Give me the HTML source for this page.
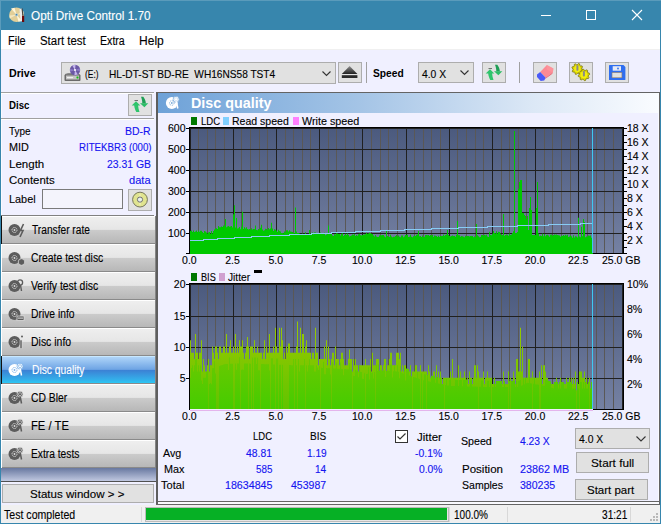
<!DOCTYPE html><html><head><meta charset="utf-8"><style>
html,body{margin:0;padding:0;}
body{width:661px;height:524px;overflow:hidden;position:relative;background:#f0f0ff;font-family:"Liberation Sans",sans-serif;}
.t{position:absolute;white-space:nowrap;line-height:1;-webkit-text-stroke:0.12px currentColor;}
div{box-sizing:border-box;}
svg{position:absolute;}
</style></head><body>

<div style="position:absolute;left:0px;top:0px;width:661px;height:30px;background:#3786ad;"></div>
<div class="t" style="left:30.50px;top:10.00px;font-size:12px;color:#fff;transform:scaleX(0.9791);transform-origin:0 0;white-space:pre;">Opti Drive Control 1.70</div>
<svg style="left:8px;top:6px" width="18" height="18"><circle cx="8.5" cy="8.8" r="7.3" fill="#e2cf98"/><path d="M8.5 8.8 L3 2.5 L6.5 1.8 Z M8.5 8.8 L14 15 L10.5 15.8 Z" fill="#fff6d8"/><path d="M8.5 8.8 L1.3 9.5 L1.8 12.5 Z M8.5 8.8 L15.7 8 L15.3 5 Z" fill="#f4e8c0"/><circle cx="8.5" cy="8.8" r="1.6" fill="#b8c8d0"/><circle cx="8.5" cy="8.8" r="0.8" fill="#3786ad"/><path d="M11.5 3.2 L13.6 2.2 L14.4 15 L12.6 15.6 Z" fill="#ececec"/><path d="M13.6 2.2 L14.6 2.6 L15.4 9.5 L14.3 9.8 Z" fill="#404040"/><rect x="14" y="9.8" width="2.2" height="6.2" fill="#6e0808"/></svg>
<div style="position:absolute;left:541px;top:15px;width:10px;height:1px;background:#fff;"></div>
<div style="position:absolute;left:586px;top:10px;width:10px;height:10px;border:1px solid #fff;"></div>
<svg style="left:631px;top:9px" width="12" height="12"><path d="M1 1 L11 11 M11 1 L1 11" stroke="#fff" stroke-width="1.1"/></svg>
<div style="position:absolute;left:0px;top:30px;width:661px;height:19px;background:#fff;"></div>
<div style="position:absolute;left:0px;top:49px;width:661px;height:1px;background:#f0f0f0;"></div>
<div class="t" style="left:8.30px;top:35.00px;font-size:12px;color:#000;transform:scaleX(0.9147);transform-origin:0 0;white-space:pre;">File</div>
<div class="t" style="left:40.10px;top:35.00px;font-size:12px;color:#000;transform:scaleX(0.9521);transform-origin:0 0;white-space:pre;">Start test</div>
<div class="t" style="left:100.20px;top:35.00px;font-size:12px;color:#000;transform:scaleX(0.8841);transform-origin:0 0;white-space:pre;">Extra</div>
<div class="t" style="left:139.20px;top:35.00px;font-size:12px;color:#000;transform:scaleX(1.0040);transform-origin:0 0;white-space:pre;">Help</div>
<div style="position:absolute;left:0px;top:0px;width:1px;height:524px;background:#3786ad;"></div>
<div style="position:absolute;left:660px;top:0px;width:1px;height:524px;background:#3786ad;"></div>
<div style="position:absolute;left:0px;top:523px;width:661px;height:1px;background:#3786ad;"></div>
<div style="position:absolute;left:0px;top:0px;width:661px;height:1px;background:#5a9bbb;"></div>
<div style="position:absolute;left:0px;top:0px;width:1px;height:30px;background:#5a9bbb;"></div>
<div class="t" style="left:9.30px;top:68.00px;font-size:11.3px;color:#000;transform:scaleX(0.9451);transform-origin:0 0;white-space:pre;font-weight:bold;-webkit-text-stroke:0;">Drive</div>
<div style="position:absolute;left:61px;top:62px;width:275px;height:22px;background:#e1e1e1;border:1px solid #adadad;"></div>
<svg style="left:63px;top:64px" width="19" height="18"><defs><radialGradient id="pd"><stop offset="0" stop-color="#fff"/><stop offset="0.25" stop-color="#b8a8e0"/><stop offset="1" stop-color="#6a58a8"/></radialGradient></defs><path d="M2 10 L5 9 L15 9 L17 10.5 L17 16.5 L2 16.5 Z" fill="#8a8a8a"/><rect x="1.5" y="10.5" width="16" height="6.5" rx="1" fill="#6a6a6a"/><rect x="3" y="11.5" width="13" height="4" fill="#c4c4c4"/><rect x="4" y="13" width="6" height="1.2" fill="#f0f0f0"/><circle cx="12" cy="6" r="5.2" fill="#6a58a4"/><path d="M12 6 L9.2 1.4 L12.6 0.8 Z M12 6 L14.8 10.6 L11.4 11.2 Z" fill="#c4b4ec"/><path d="M12 6 L16.9 4.2 L17 7.2 Z M12 6 L7.1 7.8 L7 4.8 Z" fill="#8a78c4"/><circle cx="12" cy="6" r="1.1" fill="#fff"/><path d="M13.5 13.5 H15.5 M14.5 12.5 V14.5" stroke="#10c010" stroke-width="1.3"/></svg>
<div class="t" style="left:84.80px;top:69.00px;font-size:11px;color:#000;transform:scaleX(0.7627);transform-origin:0 0;white-space:pre;">(E:)</div>
<div class="t" style="left:108.80px;top:69.00px;font-size:11px;color:#000;transform:scaleX(0.9205);transform-origin:0 0;white-space:pre;">HL-DT-ST BD-RE  WH16NS58 TST4</div>
<svg style="left:322px;top:71px" width="9" height="6"><path d="M0.5 0.5 L4.5 4.5 L8.5 0.5" fill="none" stroke="#333" stroke-width="1.1"/></svg>
<div style="position:absolute;left:338px;top:62px;width:24px;height:21px;background:#e1e1e1;border:1px solid #adadad;"></div>
<svg style="left:341px;top:65px" width="18" height="15"><defs><linearGradient id="ej" x1="0" y1="0" x2="0" y2="1"><stop offset="0" stop-color="#909090"/><stop offset="1" stop-color="#202020"/></linearGradient></defs><path d="M8.6 1 L16.4 9 L0.8 9 Z" fill="url(#ej)"/><rect x="0.8" y="10.2" width="15.6" height="2.8" fill="#2a2a2a"/></svg>
<div style="position:absolute;left:366px;top:62px;width:1px;height:21px;background:#a0a0a0;"></div>
<div class="t" style="left:373.30px;top:68.00px;font-size:11.3px;color:#000;transform:scaleX(0.9056);transform-origin:0 0;white-space:pre;font-weight:bold;-webkit-text-stroke:0;">Speed</div>
<div style="position:absolute;left:418px;top:62px;width:56px;height:21px;background:#e1e1e1;border:1px solid #adadad;"></div>
<div class="t" style="left:421.80px;top:69.00px;font-size:11px;color:#000;transform:scaleX(0.9377);transform-origin:0 0;white-space:pre;">4.0 X</div>
<svg style="left:460px;top:70px" width="9" height="6"><path d="M0.5 0.5 L4.5 4.5 L8.5 0.5" fill="none" stroke="#333" stroke-width="1.1"/></svg>
<div style="position:absolute;left:482px;top:62px;width:24px;height:21px;background:#e1e1e1;border:1px solid #adadad;"></div>
<svg style="left:482px;top:62px" width="24" height="21"><path d="M3.7 11.4 L8 7.2 L12.3 11.4 L10.1 11.4 C10.3 13.8 10.7 15.8 11.5 17.9 L8.3 17.9 C7.2 15.8 6.4 13.6 6.2 11.4 Z" fill="#2fc46c"/><path d="M13 2.8 L15.3 2.8 C16.7 4.6 17.7 6.8 17.9 9.4 L14.3 9.4 C14.3 7 13.8 4.8 13 2.8 Z" fill="#1f9e56"/><path d="M12 9.2 L20.3 9.2 L16.4 13.3 Z" fill="#2cbd66"/><rect x="6.5" y="6.1" width="3.5" height="0.9" fill="#666"/></svg>
<div style="position:absolute;left:519px;top:62px;width:1px;height:21px;background:#a0a0a0;"></div>
<div style="position:absolute;left:533px;top:62px;width:24px;height:21px;background:#e1e1e1;border:1px solid #adadad;"></div>
<svg style="left:532px;top:60px" width="28" height="26"><path d="M8.2 11.9 L14.9 5 L21.4 8.5 L20.9 12.4 L13.7 17.7 Z" fill="#fb8a94"/><path d="M14.9 5 L21.4 8.5 L20.9 12.4 L14.5 9.5 Z" fill="#ff9aa0" opacity="0.6"/><path d="M5 14.4 L8.2 11.9 L13.7 17.7 L12.2 20.4 L8.7 20.9 L5 16.9 Z" fill="#4a5af8"/><path d="M13.7 17.7 L20.9 12.4 L20 14 L13 19 Z" fill="#e85060"/></svg>
<div style="position:absolute;left:569px;top:62px;width:24px;height:21px;background:#e1e1e1;border:1px solid #adadad;"></div>
<svg style="left:567px;top:60px" width="28" height="26"><path d="M15.89 10.11 L15.57 11.16 L14.05 11.46 L13.50 12.12 L13.49 13.67 L12.52 14.18 L11.24 13.32 L10.38 13.40 L9.29 14.49 L8.24 14.17 L7.94 12.65 L7.28 12.10 L5.73 12.09 L5.22 11.12 L6.08 9.84 L6.00 8.98 L4.91 7.89 L5.23 6.84 L6.75 6.54 L7.30 5.88 L7.31 4.33 L8.28 3.82 L9.56 4.68 L10.42 4.60 L11.51 3.51 L12.56 3.83 L12.86 5.35 L13.52 5.90 L15.07 5.91 L15.58 6.88 L14.72 8.16 L14.80 9.02Z" fill="#dcd400" stroke="#6e6a10" stroke-width="0.7"/><path d="M21.99 17.68 L21.35 18.62 L19.79 18.48 L19.03 18.98 L18.53 20.47 L17.42 20.68 L16.41 19.47 L15.52 19.29 L14.12 19.99 L13.18 19.35 L13.32 17.79 L12.82 17.03 L11.33 16.53 L11.12 15.42 L12.33 14.41 L12.51 13.52 L11.81 12.12 L12.45 11.18 L14.01 11.32 L14.77 10.82 L15.27 9.33 L16.38 9.12 L17.39 10.33 L18.28 10.51 L19.68 9.81 L20.62 10.45 L20.48 12.01 L20.98 12.77 L22.47 13.27 L22.68 14.38 L21.47 15.39 L21.29 16.28Z" fill="#dcd400" stroke="#6e6a10" stroke-width="0.7"/><circle cx="10.4" cy="9" r="3.2" fill="#f2ee10"/><circle cx="16.9" cy="14.9" r="3.4" fill="#f2ee10"/><rect x="9.4" y="5.2" width="2" height="5.5" rx="0.8" fill="#8a8a8a"/><rect x="15.9" y="11" width="2" height="5.5" rx="0.8" fill="#8a8a8a"/></svg>
<div style="position:absolute;left:605px;top:62px;width:24px;height:21px;background:#e1e1e1;border:1px solid #adadad;"></div>
<svg style="left:603px;top:60px" width="28" height="26"><path d="M6 5.5 Q6 5 6.5 5 L20.5 5 L22.4 7 L22.4 19.5 Q22.4 20 21.9 20 L6.5 20 Q6 20 6 19.5 Z" fill="#2f6ef0"/><rect x="9.7" y="6.2" width="8.3" height="4.5" fill="#e6eaf6"/><circle cx="15" cy="8.5" r="0.9" fill="#3070f0"/><rect x="8.7" y="12.2" width="10.5" height="5.8" fill="#8a7a70"/><rect x="9.3" y="12.8" width="9.3" height="4.6" fill="#e0e0e0"/></svg>
<div style="position:absolute;left:1px;top:94px;width:1px;height:121px;background:#fafaff;"></div>
<div style="position:absolute;left:1px;top:92px;width:153px;height:1px;background:#a0a0a0;"></div>
<div style="position:absolute;left:1px;top:93px;width:153px;height:1px;background:#fff;"></div>
<div class="t" style="left:9.40px;top:100.00px;font-size:11px;color:#000;transform:scaleX(0.8774);transform-origin:0 0;white-space:pre;font-weight:bold;-webkit-text-stroke:0;">Disc</div>
<div style="position:absolute;left:128px;top:94px;width:24px;height:22px;background:#e1e1e1;border:1px solid #adadad;"></div>
<svg style="left:128px;top:94px" width="24" height="22"><path d="M3.7 11.4 L8 7.2 L12.3 11.4 L10.1 11.4 C10.3 13.8 10.7 15.8 11.5 17.9 L8.3 17.9 C7.2 15.8 6.4 13.6 6.2 11.4 Z" fill="#2fc46c"/><path d="M13 2.8 L15.3 2.8 C16.7 4.6 17.7 6.8 17.9 9.4 L14.3 9.4 C14.3 7 13.8 4.8 13 2.8 Z" fill="#1f9e56"/><path d="M12 9.2 L20.3 9.2 L16.4 13.3 Z" fill="#2cbd66"/><rect x="6.5" y="6.1" width="3.5" height="0.9" fill="#666"/></svg>
<div style="position:absolute;left:1px;top:118px;width:153px;height:1px;background:#a0a0a0;"></div>
<div style="position:absolute;left:1px;top:119px;width:153px;height:1px;background:#fff;"></div>
<div class="t" style="left:9.40px;top:126.00px;font-size:10.8px;color:#000;transform:scaleX(0.9231);transform-origin:0 0;white-space:pre;">Type</div>
<div class="t" style="left:125.30px;top:126.00px;font-size:10.5px;color:#1414f0;transform:scaleX(0.9981);transform-origin:0 0;white-space:pre;">BD-R</div>
<div class="t" style="left:9.40px;top:142.00px;font-size:10.8px;color:#000;transform:scaleX(1.0051);transform-origin:0 0;white-space:pre;">MID</div>
<div class="t" style="left:78.60px;top:142.00px;font-size:10.5px;color:#1414f0;transform:scaleX(0.9213);transform-origin:0 0;white-space:pre;">RITEKBR3 (000)</div>
<div class="t" style="left:9.40px;top:159.00px;font-size:10.8px;color:#000;transform:scaleX(1.0681);transform-origin:0 0;white-space:pre;">Length</div>
<div class="t" style="left:106.70px;top:159.00px;font-size:10.5px;color:#1414f0;transform:scaleX(0.9899);transform-origin:0 0;white-space:pre;">23.31 GB</div>
<div class="t" style="left:9.40px;top:175.00px;font-size:10.8px;color:#000;transform:scaleX(1.0566);transform-origin:0 0;white-space:pre;">Contents</div>
<div class="t" style="left:129.00px;top:175.00px;font-size:10.5px;color:#1414f0;transform:scaleX(1.0562);transform-origin:0 0;white-space:pre;">data</div>
<div class="t" style="left:9.40px;top:194.00px;font-size:10.8px;color:#000;transform:scaleX(1.0076);transform-origin:0 0;white-space:pre;">Label</div>
<div style="position:absolute;left:42px;top:189px;width:81px;height:20px;background:#fff;border:1px solid #7a7a7a;"></div>
<div style="position:absolute;left:43px;top:190px;width:79px;height:18px;background:#f4f4fc;"></div>
<div style="position:absolute;left:128px;top:189px;width:24px;height:22px;background:#e1e1e1;border:1px solid #adadad;"></div>
<svg style="left:128px;top:189px" width="24" height="22"><circle cx="12" cy="10.6" r="7.4" fill="#e0e490" stroke="#6a6a50" stroke-width="0.9"/><path d="M12 3.5 L14 10.6 L12 17.7 L10 10.6 Z" fill="#f4f4c0" opacity="0.7"/><circle cx="12" cy="10.6" r="2.6" fill="#e8f0e8" stroke="#707070" stroke-width="1"/></svg>
<div style="position:absolute;left:1px;top:215px;width:153px;height:1px;background:#808080;"></div>
<div style="position:absolute;left:1px;top:216px;width:155px;height:28px;background:linear-gradient(#efefef 0%, #e6e6e6 48%, #cbcbcb 50%, #b8b8b8 95%, #b2b2b2 100%);"></div>
<div style="position:absolute;left:1px;top:216px;width:1px;height:28px;background:#101010;"></div>
<div style="position:absolute;left:2px;top:243px;width:154px;height:1px;background:#8a8a8a;"></div>
<div style="position:absolute;left:2px;top:216px;width:154px;height:1px;background:#ffffff;"></div>
<div style="position:absolute;left:155px;top:216px;width:1px;height:28px;background:#858585;"></div>
<svg style="left:7px;top:222px" width="19" height="17"><circle cx="7.5" cy="8" r="6" fill="#5c5c5c"/><circle cx="7.5" cy="8" r="2.5" fill="none" stroke="#dcdcdc" stroke-width="0.9" stroke-dasharray="1.3 0.6"/><circle cx="7.5" cy="8" r="0.9" fill="#dcdcdc"/><path d="M16.5 2 L13.5 8.5 L16 8.5 L13 15" fill="none" stroke="#5c5c5c" stroke-width="1.6"/></svg>
<div class="t" style="left:31.90px;top:224.00px;font-size:12px;color:#000;transform:scaleX(0.8484);transform-origin:0 0;white-space:pre;">Transfer rate</div>
<div style="position:absolute;left:1px;top:244px;width:155px;height:28px;background:linear-gradient(#efefef 0%, #e6e6e6 48%, #cbcbcb 50%, #b8b8b8 95%, #b2b2b2 100%);"></div>
<div style="position:absolute;left:1px;top:244px;width:1px;height:28px;background:#ffffff;"></div>
<div style="position:absolute;left:2px;top:271px;width:154px;height:1px;background:#8a8a8a;"></div>
<div style="position:absolute;left:2px;top:244px;width:154px;height:1px;background:#ffffff;"></div>
<div style="position:absolute;left:155px;top:244px;width:1px;height:28px;background:#858585;"></div>
<svg style="left:7px;top:250px" width="19" height="17"><circle cx="7.5" cy="8" r="6" fill="#5c5c5c"/><circle cx="7.5" cy="8" r="2.5" fill="none" stroke="#dcdcdc" stroke-width="0.9" stroke-dasharray="1.3 0.6"/><circle cx="7.5" cy="8" r="0.9" fill="#dcdcdc"/><circle cx="14.5" cy="12" r="3.3" fill="#5c5c5c" stroke="#dcdcdc" stroke-width="0.8"/></svg>
<div class="t" style="left:30.80px;top:252.00px;font-size:12px;color:#000;transform:scaleX(0.8674);transform-origin:0 0;white-space:pre;">Create test disc</div>
<div style="position:absolute;left:1px;top:272px;width:155px;height:28px;background:linear-gradient(#efefef 0%, #e6e6e6 48%, #cbcbcb 50%, #b8b8b8 95%, #b2b2b2 100%);"></div>
<div style="position:absolute;left:1px;top:272px;width:1px;height:28px;background:#ffffff;"></div>
<div style="position:absolute;left:2px;top:299px;width:154px;height:1px;background:#8a8a8a;"></div>
<div style="position:absolute;left:2px;top:272px;width:154px;height:1px;background:#ffffff;"></div>
<div style="position:absolute;left:155px;top:272px;width:1px;height:28px;background:#858585;"></div>
<svg style="left:7px;top:278px" width="19" height="17"><circle cx="7.5" cy="8" r="6" fill="#5c5c5c"/><circle cx="7.5" cy="8" r="2.5" fill="none" stroke="#dcdcdc" stroke-width="0.9" stroke-dasharray="1.3 0.6"/><circle cx="7.5" cy="8" r="0.9" fill="#dcdcdc"/><circle cx="13" cy="4.5" r="2.6" fill="none" stroke="#5c5c5c" stroke-width="1.3"/><path d="M13.5 7 L14.5 13" stroke="#5c5c5c" stroke-width="1.4"/></svg>
<div class="t" style="left:31.30px;top:280.00px;font-size:12px;color:#000;transform:scaleX(0.8675);transform-origin:0 0;white-space:pre;">Verify test disc</div>
<div style="position:absolute;left:1px;top:300px;width:155px;height:28px;background:linear-gradient(#efefef 0%, #e6e6e6 48%, #cbcbcb 50%, #b8b8b8 95%, #b2b2b2 100%);"></div>
<div style="position:absolute;left:1px;top:300px;width:1px;height:28px;background:#ffffff;"></div>
<div style="position:absolute;left:2px;top:327px;width:154px;height:1px;background:#8a8a8a;"></div>
<div style="position:absolute;left:2px;top:300px;width:154px;height:1px;background:#ffffff;"></div>
<div style="position:absolute;left:155px;top:300px;width:1px;height:28px;background:#858585;"></div>
<svg style="left:7px;top:306px" width="19" height="17"><circle cx="7.5" cy="8" r="6" fill="#5c5c5c"/><circle cx="7.5" cy="8" r="2.5" fill="none" stroke="#dcdcdc" stroke-width="0.9" stroke-dasharray="1.3 0.6"/><circle cx="7.5" cy="8" r="0.9" fill="#dcdcdc"/><rect x="10" y="10" width="7" height="4.5" fill="#5c5c5c" stroke="#dcdcdc" stroke-width="0.8"/><rect x="11" y="11.6" width="5" height="1" fill="#dcdcdc"/></svg>
<div class="t" style="left:31.30px;top:308.00px;font-size:12px;color:#000;transform:scaleX(0.8600);transform-origin:0 0;white-space:pre;">Drive info</div>
<div style="position:absolute;left:1px;top:328px;width:155px;height:28px;background:linear-gradient(#efefef 0%, #e6e6e6 48%, #cbcbcb 50%, #b8b8b8 95%, #b2b2b2 100%);"></div>
<div style="position:absolute;left:1px;top:328px;width:1px;height:28px;background:#ffffff;"></div>
<div style="position:absolute;left:2px;top:355px;width:154px;height:1px;background:#8a8a8a;"></div>
<div style="position:absolute;left:2px;top:328px;width:154px;height:1px;background:#ffffff;"></div>
<div style="position:absolute;left:155px;top:328px;width:1px;height:28px;background:#858585;"></div>
<svg style="left:7px;top:334px" width="19" height="17"><circle cx="7.5" cy="8" r="6" fill="#5c5c5c"/><circle cx="7.5" cy="8" r="2.5" fill="none" stroke="#dcdcdc" stroke-width="0.9" stroke-dasharray="1.3 0.6"/><circle cx="7.5" cy="8" r="0.9" fill="#dcdcdc"/><rect x="13" y="6" width="2" height="8.5" fill="#5c5c5c" stroke="#dcdcdc" stroke-width="0.6"/><circle cx="15" cy="2.5" r="1" fill="#5c5c5c"/></svg>
<div class="t" style="left:31.30px;top:336.00px;font-size:12px;color:#000;transform:scaleX(0.8717);transform-origin:0 0;white-space:pre;">Disc info</div>
<div style="position:absolute;left:1px;top:356px;width:155px;height:28px;background:linear-gradient(#b4d8fa 0%, #6ea4e4 48%, #3c80d4 50%, #34b0ea 85%, #28d0f8 100%);"></div>
<div style="position:absolute;left:1px;top:356px;width:1px;height:28px;background:#101010;"></div>
<div style="position:absolute;left:2px;top:383px;width:154px;height:1px;background:#8a8a8a;"></div>
<div style="position:absolute;left:2px;top:356px;width:154px;height:1px;background:#c8e8ff;"></div>
<div style="position:absolute;left:155px;top:356px;width:1px;height:28px;background:#858585;"></div>
<svg style="left:7px;top:362px" width="19" height="17"><circle cx="7.5" cy="8" r="6" fill="#ffffff"/><circle cx="7.5" cy="8" r="2.5" fill="none" stroke="#7ab0e8" stroke-width="0.9" stroke-dasharray="1.3 0.6"/><circle cx="7.5" cy="8" r="0.9" fill="#7ab0e8"/><circle cx="13" cy="4.2" r="3" fill="#ffffff" stroke="#7ab0e8" stroke-width="0.8"/><circle cx="13" cy="4.2" r="1.5" fill="none" stroke="#7ab0e8" stroke-width="0.7"/><path d="M13.3 6.8 L14.5 13.5" stroke="#ffffff" stroke-width="1.5"/></svg>
<div class="t" style="left:31.80px;top:364.00px;font-size:12px;color:#fff;transform:scaleX(0.8557);transform-origin:0 0;white-space:pre;">Disc quality</div>
<div style="position:absolute;left:1px;top:384px;width:155px;height:28px;background:linear-gradient(#efefef 0%, #e6e6e6 48%, #cbcbcb 50%, #b8b8b8 95%, #b2b2b2 100%);"></div>
<div style="position:absolute;left:1px;top:384px;width:1px;height:28px;background:#ffffff;"></div>
<div style="position:absolute;left:2px;top:411px;width:154px;height:1px;background:#8a8a8a;"></div>
<div style="position:absolute;left:2px;top:384px;width:154px;height:1px;background:#ffffff;"></div>
<div style="position:absolute;left:155px;top:384px;width:1px;height:28px;background:#858585;"></div>
<svg style="left:7px;top:390px" width="19" height="17"><circle cx="7.5" cy="8" r="6" fill="#5c5c5c"/><circle cx="7.5" cy="8" r="2.5" fill="none" stroke="#dcdcdc" stroke-width="0.9" stroke-dasharray="1.3 0.6"/><circle cx="7.5" cy="8" r="0.9" fill="#dcdcdc"/><circle cx="13" cy="4.2" r="3" fill="#5c5c5c" stroke="#dcdcdc" stroke-width="0.8"/><circle cx="13" cy="4.2" r="1.5" fill="none" stroke="#dcdcdc" stroke-width="0.7"/><path d="M13.3 6.8 L14.5 13.5" stroke="#5c5c5c" stroke-width="1.5"/></svg>
<div class="t" style="left:30.50px;top:392.00px;font-size:12px;color:#000;transform:scaleX(0.8619);transform-origin:0 0;white-space:pre;">CD Bler</div>
<div style="position:absolute;left:1px;top:412px;width:155px;height:28px;background:linear-gradient(#efefef 0%, #e6e6e6 48%, #cbcbcb 50%, #b8b8b8 95%, #b2b2b2 100%);"></div>
<div style="position:absolute;left:1px;top:412px;width:1px;height:28px;background:#ffffff;"></div>
<div style="position:absolute;left:2px;top:439px;width:154px;height:1px;background:#8a8a8a;"></div>
<div style="position:absolute;left:2px;top:412px;width:154px;height:1px;background:#ffffff;"></div>
<div style="position:absolute;left:155px;top:412px;width:1px;height:28px;background:#858585;"></div>
<svg style="left:7px;top:418px" width="19" height="17"><circle cx="7.5" cy="8" r="6" fill="#5c5c5c"/><circle cx="7.5" cy="8" r="2.5" fill="none" stroke="#dcdcdc" stroke-width="0.9" stroke-dasharray="1.3 0.6"/><circle cx="7.5" cy="8" r="0.9" fill="#dcdcdc"/><circle cx="13" cy="4.2" r="3" fill="#5c5c5c" stroke="#dcdcdc" stroke-width="0.8"/><circle cx="13" cy="4.2" r="1.5" fill="none" stroke="#dcdcdc" stroke-width="0.7"/><path d="M13.3 6.8 L14.5 13.5" stroke="#5c5c5c" stroke-width="1.5"/></svg>
<div class="t" style="left:30.90px;top:420.00px;font-size:12px;color:#000;transform:scaleX(0.9370);transform-origin:0 0;white-space:pre;">FE / TE</div>
<div style="position:absolute;left:1px;top:440px;width:155px;height:28px;background:linear-gradient(#efefef 0%, #e6e6e6 48%, #cbcbcb 50%, #b8b8b8 95%, #b2b2b2 100%);"></div>
<div style="position:absolute;left:1px;top:440px;width:1px;height:28px;background:#ffffff;"></div>
<div style="position:absolute;left:2px;top:467px;width:154px;height:1px;background:#8a8a8a;"></div>
<div style="position:absolute;left:2px;top:440px;width:154px;height:1px;background:#ffffff;"></div>
<div style="position:absolute;left:155px;top:440px;width:1px;height:28px;background:#858585;"></div>
<svg style="left:7px;top:446px" width="19" height="17"><circle cx="7.5" cy="8" r="6" fill="#5c5c5c"/><circle cx="7.5" cy="8" r="2.5" fill="none" stroke="#dcdcdc" stroke-width="0.9" stroke-dasharray="1.3 0.6"/><circle cx="7.5" cy="8" r="0.9" fill="#dcdcdc"/><circle cx="13" cy="4.2" r="3" fill="#5c5c5c" stroke="#dcdcdc" stroke-width="0.8"/><circle cx="13" cy="4.2" r="1.5" fill="none" stroke="#dcdcdc" stroke-width="0.7"/><path d="M13.3 6.8 L14.5 13.5" stroke="#5c5c5c" stroke-width="1.5"/></svg>
<div class="t" style="left:30.90px;top:448.00px;font-size:12px;color:#000;transform:scaleX(0.8536);transform-origin:0 0;white-space:pre;">Extra tests</div>
<div style="position:absolute;left:1px;top:468px;width:155px;height:13px;background:linear-gradient(#6878a0,#c0c8e0);"></div>
<div style="position:absolute;left:1px;top:481px;width:155px;height:1px;background:#505050;"></div>
<div style="position:absolute;left:2px;top:484px;width:152px;height:19px;background:#e1e1e1;border:1px solid #adadad;"></div>
<div class="t" style="left:30.30px;top:489.00px;font-size:11.5px;color:#000;transform:scaleX(1.0048);transform-origin:0 0;white-space:pre;">Status window &gt; &gt;</div>
<div style="position:absolute;left:1px;top:505px;width:659px;height:18px;background:#f0f0f0;"></div>
<div class="t" style="left:3.80px;top:509.00px;font-size:12px;color:#000;transform:scaleX(0.8823);transform-origin:0 0;white-space:pre;">Test completed</div>
<div style="position:absolute;left:141px;top:507px;width:1px;height:15px;background:#d8d8d8;"></div>
<div style="position:absolute;left:145px;top:507px;width:304px;height:15px;background:#e6e6e6;border:1px solid #bcbcbc;"></div>
<div style="position:absolute;left:146px;top:508px;width:301px;height:12px;background:#06b025;"></div>
<div style="position:absolute;left:449px;top:507px;width:1px;height:15px;background:#d8d8d8;"></div>
<div class="t" style="left:454.20px;top:509.00px;font-size:12px;color:#000;transform:scaleX(0.8354);transform-origin:0 0;white-space:pre;">100.0%</div>
<div style="position:absolute;left:507px;top:507px;width:1px;height:15px;background:#d8d8d8;"></div>
<div class="t" style="left:602.20px;top:509.00px;font-size:12px;color:#000;transform:scaleX(0.8453);transform-origin:0 0;white-space:pre;">31:21</div>
<div style="position:absolute;left:630px;top:507px;width:1px;height:15px;background:#d8d8d8;"></div>
<div style="position:absolute;left:656px;top:513px;width:2px;height:2px;background:#b8b8b8;"></div>
<div style="position:absolute;left:653px;top:516px;width:2px;height:2px;background:#b8b8b8;"></div>
<div style="position:absolute;left:656px;top:516px;width:2px;height:2px;background:#b8b8b8;"></div>
<div style="position:absolute;left:650px;top:519px;width:2px;height:2px;background:#b8b8b8;"></div>
<div style="position:absolute;left:653px;top:519px;width:2px;height:2px;background:#b8b8b8;"></div>
<div style="position:absolute;left:656px;top:519px;width:2px;height:2px;background:#b8b8b8;"></div>
<div style="position:absolute;left:156px;top:92px;width:504px;height:1px;background:#646464;"></div>
<div style="position:absolute;left:156px;top:92px;width:2px;height:413px;background:#5e5e5e;"></div>
<div style="position:absolute;left:659px;top:92px;width:1px;height:413px;background:#646464;"></div>
<div style="position:absolute;left:158px;top:501px;width:501px;height:1px;background:#646464;"></div>
<div style="position:absolute;left:158px;top:502px;width:501px;height:2px;background:#fafaff;"></div>
<div style="position:absolute;left:156px;top:504px;width:504px;height:1px;background:#646464;"></div>
<div style="position:absolute;left:658px;top:113px;width:1px;height:388px;background:#fafaff;"></div>
<div style="position:absolute;left:158px;top:93px;width:501px;height:20px;background:linear-gradient(90deg,#6ea2d8 0%,#a4c4e6 40%,#dce8f6 75%,#fafcff 100%);"></div>
<svg style="left:164px;top:95px" width="18" height="16"><circle cx="7.8" cy="8" r="5.9" fill="#fff"/><circle cx="7.8" cy="8" r="2.3" fill="none" stroke="#7aaad8" stroke-width="0.9" stroke-dasharray="1.2 0.8"/><circle cx="7.8" cy="8" r="0.9" fill="#7aaad8"/><circle cx="12.1" cy="4.3" r="3" fill="#fff" stroke="#7aaad8" stroke-width="0.8"/><circle cx="12.1" cy="4.3" r="1.6" fill="none" stroke="#c0d8f0" stroke-width="0.7"/><path d="M12.3 6.5 L13.8 13.5" stroke="#fff" stroke-width="1.6"/></svg>
<div class="t" style="left:191.30px;top:95.00px;font-size:15px;color:#fff;transform:scaleX(0.9561);transform-origin:0 0;white-space:pre;font-weight:bold;-webkit-text-stroke:0;">Disc quality</div>
<svg style="left:0px;top:0px" width="661" height="524" shape-rendering="crispEdges">
<defs><linearGradient id="bg" x1="0" y1="0" x2="0" y2="1"><stop offset="0" stop-color="#4b5a7e"/><stop offset="1" stop-color="#7581a3"/></linearGradient></defs>
<rect x="190" y="128" width="433" height="125" fill="url(#bg)"/>
<rect x="190" y="284" width="433" height="125" fill="url(#bg)"/>
<rect x="190" y="128" width="1" height="125" fill="#202020"/>
<rect x="198" y="128" width="1" height="125" fill="#5a5856"/>
<rect x="207" y="128" width="1" height="125" fill="#5a5856"/>
<rect x="215" y="128" width="1" height="125" fill="#5a5856"/>
<rect x="224" y="128" width="1" height="125" fill="#5a5856"/>
<rect x="233" y="128" width="1" height="125" fill="#202020"/>
<rect x="241" y="128" width="1" height="125" fill="#5a5856"/>
<rect x="250" y="128" width="1" height="125" fill="#5a5856"/>
<rect x="259" y="128" width="1" height="125" fill="#5a5856"/>
<rect x="267" y="128" width="1" height="125" fill="#5a5856"/>
<rect x="276" y="128" width="1" height="125" fill="#202020"/>
<rect x="285" y="128" width="1" height="125" fill="#5a5856"/>
<rect x="293" y="128" width="1" height="125" fill="#5a5856"/>
<rect x="302" y="128" width="1" height="125" fill="#5a5856"/>
<rect x="310" y="128" width="1" height="125" fill="#5a5856"/>
<rect x="319" y="128" width="1" height="125" fill="#202020"/>
<rect x="328" y="128" width="1" height="125" fill="#5a5856"/>
<rect x="336" y="128" width="1" height="125" fill="#5a5856"/>
<rect x="345" y="128" width="1" height="125" fill="#5a5856"/>
<rect x="354" y="128" width="1" height="125" fill="#5a5856"/>
<rect x="362" y="128" width="1" height="125" fill="#202020"/>
<rect x="371" y="128" width="1" height="125" fill="#5a5856"/>
<rect x="380" y="128" width="1" height="125" fill="#5a5856"/>
<rect x="388" y="128" width="1" height="125" fill="#5a5856"/>
<rect x="397" y="128" width="1" height="125" fill="#5a5856"/>
<rect x="406" y="128" width="1" height="125" fill="#202020"/>
<rect x="414" y="128" width="1" height="125" fill="#5a5856"/>
<rect x="423" y="128" width="1" height="125" fill="#5a5856"/>
<rect x="431" y="128" width="1" height="125" fill="#5a5856"/>
<rect x="440" y="128" width="1" height="125" fill="#5a5856"/>
<rect x="449" y="128" width="1" height="125" fill="#202020"/>
<rect x="457" y="128" width="1" height="125" fill="#5a5856"/>
<rect x="466" y="128" width="1" height="125" fill="#5a5856"/>
<rect x="475" y="128" width="1" height="125" fill="#5a5856"/>
<rect x="483" y="128" width="1" height="125" fill="#5a5856"/>
<rect x="492" y="128" width="1" height="125" fill="#202020"/>
<rect x="501" y="128" width="1" height="125" fill="#5a5856"/>
<rect x="509" y="128" width="1" height="125" fill="#5a5856"/>
<rect x="518" y="128" width="1" height="125" fill="#5a5856"/>
<rect x="526" y="128" width="1" height="125" fill="#5a5856"/>
<rect x="535" y="128" width="1" height="125" fill="#202020"/>
<rect x="544" y="128" width="1" height="125" fill="#5a5856"/>
<rect x="552" y="128" width="1" height="125" fill="#5a5856"/>
<rect x="561" y="128" width="1" height="125" fill="#5a5856"/>
<rect x="570" y="128" width="1" height="125" fill="#5a5856"/>
<rect x="578" y="128" width="1" height="125" fill="#202020"/>
<rect x="587" y="128" width="1" height="125" fill="#5a5856"/>
<rect x="596" y="128" width="1" height="125" fill="#5a5856"/>
<rect x="604" y="128" width="1" height="125" fill="#5a5856"/>
<rect x="613" y="128" width="1" height="125" fill="#5a5856"/>
<rect x="622" y="128" width="1" height="125" fill="#202020"/>
<rect x="190" y="233" width="433" height="1" fill="#202020"/>
<rect x="190" y="212" width="433" height="1" fill="#202020"/>
<rect x="190" y="191" width="433" height="1" fill="#202020"/>
<rect x="190" y="170" width="433" height="1" fill="#202020"/>
<rect x="190" y="149" width="433" height="1" fill="#202020"/>
<rect x="190" y="128" width="433" height="1" fill="#202020"/>
<rect x="190" y="284" width="1" height="125" fill="#202020"/>
<rect x="198" y="284" width="1" height="125" fill="#5a5856"/>
<rect x="207" y="284" width="1" height="125" fill="#5a5856"/>
<rect x="215" y="284" width="1" height="125" fill="#5a5856"/>
<rect x="224" y="284" width="1" height="125" fill="#5a5856"/>
<rect x="233" y="284" width="1" height="125" fill="#202020"/>
<rect x="241" y="284" width="1" height="125" fill="#5a5856"/>
<rect x="250" y="284" width="1" height="125" fill="#5a5856"/>
<rect x="259" y="284" width="1" height="125" fill="#5a5856"/>
<rect x="267" y="284" width="1" height="125" fill="#5a5856"/>
<rect x="276" y="284" width="1" height="125" fill="#202020"/>
<rect x="285" y="284" width="1" height="125" fill="#5a5856"/>
<rect x="293" y="284" width="1" height="125" fill="#5a5856"/>
<rect x="302" y="284" width="1" height="125" fill="#5a5856"/>
<rect x="310" y="284" width="1" height="125" fill="#5a5856"/>
<rect x="319" y="284" width="1" height="125" fill="#202020"/>
<rect x="328" y="284" width="1" height="125" fill="#5a5856"/>
<rect x="336" y="284" width="1" height="125" fill="#5a5856"/>
<rect x="345" y="284" width="1" height="125" fill="#5a5856"/>
<rect x="354" y="284" width="1" height="125" fill="#5a5856"/>
<rect x="362" y="284" width="1" height="125" fill="#202020"/>
<rect x="371" y="284" width="1" height="125" fill="#5a5856"/>
<rect x="380" y="284" width="1" height="125" fill="#5a5856"/>
<rect x="388" y="284" width="1" height="125" fill="#5a5856"/>
<rect x="397" y="284" width="1" height="125" fill="#5a5856"/>
<rect x="406" y="284" width="1" height="125" fill="#202020"/>
<rect x="414" y="284" width="1" height="125" fill="#5a5856"/>
<rect x="423" y="284" width="1" height="125" fill="#5a5856"/>
<rect x="431" y="284" width="1" height="125" fill="#5a5856"/>
<rect x="440" y="284" width="1" height="125" fill="#5a5856"/>
<rect x="449" y="284" width="1" height="125" fill="#202020"/>
<rect x="457" y="284" width="1" height="125" fill="#5a5856"/>
<rect x="466" y="284" width="1" height="125" fill="#5a5856"/>
<rect x="475" y="284" width="1" height="125" fill="#5a5856"/>
<rect x="483" y="284" width="1" height="125" fill="#5a5856"/>
<rect x="492" y="284" width="1" height="125" fill="#202020"/>
<rect x="501" y="284" width="1" height="125" fill="#5a5856"/>
<rect x="509" y="284" width="1" height="125" fill="#5a5856"/>
<rect x="518" y="284" width="1" height="125" fill="#5a5856"/>
<rect x="526" y="284" width="1" height="125" fill="#5a5856"/>
<rect x="535" y="284" width="1" height="125" fill="#202020"/>
<rect x="544" y="284" width="1" height="125" fill="#5a5856"/>
<rect x="552" y="284" width="1" height="125" fill="#5a5856"/>
<rect x="561" y="284" width="1" height="125" fill="#5a5856"/>
<rect x="570" y="284" width="1" height="125" fill="#5a5856"/>
<rect x="578" y="284" width="1" height="125" fill="#202020"/>
<rect x="587" y="284" width="1" height="125" fill="#5a5856"/>
<rect x="596" y="284" width="1" height="125" fill="#5a5856"/>
<rect x="604" y="284" width="1" height="125" fill="#5a5856"/>
<rect x="613" y="284" width="1" height="125" fill="#5a5856"/>
<rect x="622" y="284" width="1" height="125" fill="#202020"/>
<rect x="190" y="378" width="433" height="1" fill="#202020"/>
<rect x="190" y="347" width="433" height="1" fill="#202020"/>
<rect x="190" y="316" width="433" height="1" fill="#202020"/>
<rect x="190" y="284" width="433" height="1" fill="#202020"/>
</svg>
<svg style="left:0px;top:0px" width="661" height="524">
<path d="M190 254 L190 231.1 L191 231.1 L191 230.6 L192 230.6 L192 232.1 L193 232.1 L193 230.4 L194 230.4 L194 231.9 L195 231.9 L195 231.4 L196 231.4 L196 230.5 L197 230.5 L197 231.9 L198 231.9 L198 230.5 L199 230.5 L199 231.8 L200 231.8 L200 230.7 L201 230.7 L201 230.8 L202 230.8 L202 231.9 L203 231.9 L203 233.1 L204 233.1 L204 231.0 L205 231.0 L205 231.4 L206 231.4 L206 232.6 L207 232.6 L207 233.6 L208 233.6 L208 232.6 L209 232.6 L209 232.1 L210 232.1 L210 233.8 L211 233.8 L211 231.1 L212 231.1 L212 233.6 L213 233.6 L213 231.0 L214 231.0 L214 229.6 L215 229.6 L215 228.6 L216 228.6 L216 228.3 L217 228.3 L217 228.9 L218 228.9 L218 226.0 L219 226.0 L219 227.2 L220 227.2 L220 227.3 L221 227.3 L221 226.5 L222 226.5 L222 227.0 L223 227.0 L223 225.5 L224 225.5 L224 225.4 L225 225.4 L225 219.0 L226 219.0 L226 227.2 L227 227.2 L227 226.4 L228 226.4 L228 226.0 L229 226.0 L229 226.8 L230 226.8 L230 226.4 L231 226.4 L231 226.0 L232 226.0 L232 227.6 L233 227.6 L233 214.3 L234 214.3 L234 205.3 L235 205.3 L235 227.4 L236 227.4 L236 218.0 L237 218.0 L237 228.6 L238 228.6 L238 228.3 L239 228.3 L239 227.1 L240 227.1 L240 229.3 L241 229.3 L241 226.8 L242 226.8 L242 211.7 L243 211.7 L243 229.0 L244 229.0 L244 227.3 L245 227.3 L245 228.5 L246 228.5 L246 227.2 L247 227.2 L247 229.1 L248 229.1 L248 229.4 L249 229.4 L249 228.9 L250 228.9 L250 229.8 L251 229.8 L251 228.2 L252 228.2 L252 229.4 L253 229.4 L253 229.1 L254 229.1 L254 229.1 L255 229.1 L255 225.6 L256 225.6 L256 230.0 L257 230.0 L257 230.3 L258 230.3 L258 228.9 L259 228.9 L259 229.6 L260 229.6 L260 227.8 L261 227.8 L261 224.8 L262 224.8 L262 229.6 L263 229.6 L263 230.7 L264 230.7 L264 230.2 L265 230.2 L265 228.7 L266 228.7 L266 229.0 L267 229.0 L267 229.9 L268 229.9 L268 228.0 L269 228.0 L269 229.3 L270 229.3 L270 228.5 L271 228.5 L271 222.7 L272 222.7 L272 228.6 L273 228.6 L273 230.9 L274 230.9 L274 229.2 L275 229.2 L275 229.7 L276 229.7 L276 230.4 L277 230.4 L277 232.0 L278 232.0 L278 229.8 L279 229.8 L279 231.1 L280 231.1 L280 231.6 L281 231.6 L281 232.9 L282 232.9 L282 232.9 L283 232.9 L283 233.2 L284 233.2 L284 231.6 L285 231.6 L285 232.2 L286 232.2 L286 230.3 L287 230.3 L287 230.2 L288 230.2 L288 231.5 L289 231.5 L289 230.3 L290 230.3 L290 231.5 L291 231.5 L291 231.8 L292 231.8 L292 231.9 L293 231.9 L293 232.8 L294 232.8 L294 233.2 L295 233.2 L295 207.4 L296 207.4 L296 231.6 L297 231.6 L297 233.0 L298 233.0 L298 232.9 L299 232.9 L299 233.6 L300 233.6 L300 234.9 L301 234.9 L301 234.1 L302 234.1 L302 233.6 L303 233.6 L303 233.9 L304 233.9 L304 234.1 L305 234.1 L305 232.3 L306 232.3 L306 234.9 L307 234.9 L307 234.5 L308 234.5 L308 234.8 L309 234.8 L309 230.0 L310 230.0 L310 233.4 L311 233.4 L311 233.5 L312 233.5 L312 232.6 L313 232.6 L313 234.2 L314 234.2 L314 232.6 L315 232.6 L315 232.6 L316 232.6 L316 233.1 L317 233.1 L317 232.9 L318 232.9 L318 233.5 L319 233.5 L319 232.7 L320 232.7 L320 232.5 L321 232.5 L321 233.0 L322 233.0 L322 232.9 L323 232.9 L323 233.7 L324 233.7 L324 232.7 L325 232.7 L325 235.3 L326 235.3 L326 234.5 L327 234.5 L327 233.2 L328 233.2 L328 225.6 L329 225.6 L329 233.8 L330 233.8 L330 233.9 L331 233.9 L331 233.2 L332 233.2 L332 235.4 L333 235.4 L333 235.9 L334 235.9 L334 234.3 L335 234.3 L335 234.4 L336 234.4 L336 233.3 L337 233.3 L337 233.4 L338 233.4 L338 234.1 L339 234.1 L339 233.9 L340 233.9 L340 235.6 L341 235.6 L341 233.7 L342 233.7 L342 233.3 L343 233.3 L343 236.1 L344 236.1 L344 234.9 L345 234.9 L345 233.8 L346 233.8 L346 235.0 L347 235.0 L347 233.5 L348 233.5 L348 235.0 L349 235.0 L349 236.4 L350 236.4 L350 236.1 L351 236.1 L351 235.6 L352 235.6 L352 234.4 L353 234.4 L353 234.7 L354 234.7 L354 234.2 L355 234.2 L355 236.0 L356 236.0 L356 235.1 L357 235.1 L357 235.7 L358 235.7 L358 234.2 L359 234.2 L359 233.7 L360 233.7 L360 235.3 L361 235.3 L361 235.6 L362 235.6 L362 235.1 L363 235.1 L363 234.8 L364 234.8 L364 234.6 L365 234.6 L365 234.2 L366 234.2 L366 232.8 L367 232.8 L367 233.9 L368 233.9 L368 233.6 L369 233.6 L369 232.8 L370 232.8 L370 232.9 L371 232.9 L371 233.8 L372 233.8 L372 233.9 L373 233.9 L373 235.4 L374 235.4 L374 236.4 L375 236.4 L375 235.0 L376 235.0 L376 236.6 L377 236.6 L377 237.0 L378 237.0 L378 237.0 L379 237.0 L379 235.4 L380 235.4 L380 235.2 L381 235.2 L381 235.2 L382 235.2 L382 235.1 L383 235.1 L383 235.1 L384 235.1 L384 236.4 L385 236.4 L385 237.2 L386 237.2 L386 231.0 L387 231.0 L387 235.9 L388 235.9 L388 236.4 L389 236.4 L389 236.9 L390 236.9 L390 234.7 L391 234.7 L391 236.4 L392 236.4 L392 237.2 L393 237.2 L393 236.8 L394 236.8 L394 236.7 L395 236.7 L395 235.9 L396 235.9 L396 235.0 L397 235.0 L397 236.8 L398 236.8 L398 235.4 L399 235.4 L399 236.8 L400 236.8 L400 237.3 L401 237.3 L401 235.6 L402 235.6 L402 235.6 L403 235.6 L403 237.2 L404 237.2 L404 236.6 L405 236.6 L405 234.9 L406 234.9 L406 234.8 L407 234.8 L407 234.8 L408 234.8 L408 237.1 L409 237.1 L409 236.8 L410 236.8 L410 234.8 L411 234.8 L411 236.8 L412 236.8 L412 237.3 L413 237.3 L413 236.3 L414 236.3 L414 235.4 L415 235.4 L415 236.0 L416 236.0 L416 234.7 L417 234.7 L417 234.4 L418 234.4 L418 231.0 L419 231.0 L419 236.3 L420 236.3 L420 235.9 L421 235.9 L421 237.1 L422 237.1 L422 235.6 L423 235.6 L423 236.9 L424 236.9 L424 236.8 L425 236.8 L425 235.0 L426 235.0 L426 235.1 L427 235.1 L427 235.2 L428 235.2 L428 235.1 L429 235.1 L429 236.1 L430 236.1 L430 235.1 L431 235.1 L431 235.6 L432 235.6 L432 234.8 L433 234.8 L433 237.1 L434 237.1 L434 235.4 L435 235.4 L435 235.7 L436 235.7 L436 236.1 L437 236.1 L437 237.1 L438 237.1 L438 235.7 L439 235.7 L439 237.1 L440 237.1 L440 235.9 L441 235.9 L441 236.0 L442 236.0 L442 236.0 L443 236.0 L443 234.5 L444 234.5 L444 235.7 L445 235.7 L445 235.0 L446 235.0 L446 234.4 L447 234.4 L447 230.0 L448 230.0 L448 235.0 L449 235.0 L449 235.9 L450 235.9 L450 236.6 L451 236.6 L451 236.1 L452 236.1 L452 235.4 L453 235.4 L453 236.0 L454 236.0 L454 236.1 L455 236.1 L455 236.8 L456 236.8 L456 234.8 L457 234.8 L457 221.0 L458 221.0 L458 235.2 L459 235.2 L459 235.3 L460 235.3 L460 236.8 L461 236.8 L461 236.0 L462 236.0 L462 236.2 L463 236.2 L463 236.8 L464 236.8 L464 237.2 L465 237.2 L465 235.8 L466 235.8 L466 236.3 L467 236.3 L467 236.0 L468 236.0 L468 236.0 L469 236.0 L469 236.6 L470 236.6 L470 235.9 L471 235.9 L471 236.1 L472 236.1 L472 235.9 L473 235.9 L473 237.3 L474 237.3 L474 236.6 L475 236.6 L475 237.1 L476 237.1 L476 224.0 L477 224.0 L477 235.3 L478 235.3 L478 236.2 L479 236.2 L479 237.3 L480 237.3 L480 237.0 L481 237.0 L481 234.9 L482 234.9 L482 234.9 L483 234.9 L483 235.8 L484 235.8 L484 234.7 L485 234.7 L485 235.2 L486 235.2 L486 234.7 L487 234.7 L487 236.5 L488 236.5 L488 236.9 L489 236.9 L489 231.7 L490 231.7 L490 235.0 L491 235.0 L491 235.3 L492 235.3 L492 233.8 L493 233.8 L493 230.9 L494 230.9 L494 233.1 L495 233.1 L495 233.4 L496 233.4 L496 231.2 L497 231.2 L497 233.4 L498 233.4 L498 231.7 L499 231.7 L499 232.0 L500 232.0 L500 233.5 L501 233.5 L501 235.0 L502 235.0 L502 235.0 L503 235.0 L503 214.0 L504 214.0 L504 235.7 L505 235.7 L505 235.1 L506 235.1 L506 234.5 L507 234.5 L507 234.7 L508 234.7 L508 235.8 L509 235.8 L509 233.5 L510 233.5 L510 235.0 L511 235.0 L511 234.5 L512 234.5 L512 233.1 L513 233.1 L513 231.2 L514 231.2 L514 131.0 L515 131.0 L515 233.0 L516 233.0 L516 233.0 L517 233.0 L517 232.0 L518 232.0 L518 189.0 L519 189.0 L519 182.0 L520 182.0 L520 180.0 L521 180.0 L521 180.0 L522 180.0 L522 213.0 L523 213.0 L523 213.0 L524 213.0 L524 215.0 L525 215.0 L525 216.0 L526 216.0 L526 219.0 L527 219.0 L527 216.0 L528 216.0 L528 230.0 L529 230.0 L529 208.0 L530 208.0 L530 197.0 L531 197.0 L531 210.0 L532 210.0 L532 235.0 L533 235.0 L533 235.0 L534 235.0 L534 235.0 L535 235.0 L535 235.0 L536 235.0 L536 208.0 L537 208.0 L537 182.0 L538 182.0 L538 233.6 L539 233.6 L539 236.2 L540 236.2 L540 235.4 L541 235.4 L541 235.9 L542 235.9 L542 233.8 L543 233.8 L543 236.2 L544 236.2 L544 233.9 L545 233.9 L545 236.3 L546 236.3 L546 235.1 L547 235.1 L547 234.8 L548 234.8 L548 235.5 L549 235.5 L549 236.7 L550 236.7 L550 234.8 L551 234.8 L551 234.4 L552 234.4 L552 235.7 L553 235.7 L553 234.9 L554 234.9 L554 234.5 L555 234.5 L555 234.7 L556 234.7 L556 234.4 L557 234.4 L557 235.0 L558 235.0 L558 235.3 L559 235.3 L559 235.4 L560 235.4 L560 236.8 L561 236.8 L561 235.4 L562 235.4 L562 236.1 L563 236.1 L563 235.1 L564 235.1 L564 235.7 L565 235.7 L565 234.7 L566 234.7 L566 235.4 L567 235.4 L567 234.8 L568 234.8 L568 236.9 L569 236.9 L569 236.4 L570 236.4 L570 235.4 L571 235.4 L571 236.3 L572 236.3 L572 237.7 L573 237.7 L573 235.2 L574 235.2 L574 237.4 L575 237.4 L575 236.3 L576 236.3 L576 236.5 L577 236.5 L577 237.5 L578 237.5 L578 217.8 L579 217.8 L579 236.6 L580 236.6 L580 237.2 L581 237.2 L581 226.8 L582 226.8 L582 236.2 L583 236.2 L583 219.0 L584 219.0 L584 222.0 L585 222.0 L585 237.2 L586 237.2 L586 236.5 L587 236.5 L587 236.4 L588 236.4 L588 235.5 L589 235.5 L589 235.8 L590 235.8 L590 235.6 L591 235.6 L591 237.7 L592 237.7 L592 236.3 L593 236.3 L593 254 Z" fill="#00c800"/>
<defs><linearGradient id="bisg" gradientUnits="userSpaceOnUse" x1="0" y1="345" x2="0" y2="410"><stop offset="0" stop-color="#74c800"/><stop offset="1" stop-color="#44cc00"/></linearGradient></defs>
<defs><linearGradient id="bisy" gradientUnits="userSpaceOnUse" x1="0" y1="325" x2="0" y2="410"><stop offset="0" stop-color="#98c800"/><stop offset="1" stop-color="#60c400"/></linearGradient></defs>
<path d="M190 409 V340.2 H191 V409Z M191 409 V352.8 H192 V409Z M192 409 V352.8 H193 V409Z M193 409 V352.8 H194 V409Z M194 409 V359.0 H195 V409Z M195 409 V334.0 H196 V409Z M196 409 V352.8 H197 V409Z M197 409 V352.8 H198 V409Z M198 409 V359.0 H199 V409Z M199 409 V352.8 H200 V409Z M200 409 V352.8 H201 V409Z M201 409 V340.2 H202 V409Z M202 409 V371.5 H203 V409Z M203 409 V359.0 H204 V409Z M204 409 V365.2 H205 V409Z M205 409 V371.5 H206 V409Z M206 409 V371.5 H207 V409Z M207 409 V365.2 H208 V409Z M208 409 V359.0 H209 V409Z M209 409 V371.5 H210 V409Z M210 409 V365.2 H211 V409Z M211 409 V365.2 H212 V409Z M212 409 V346.5 H213 V409Z M213 409 V352.8 H214 V409Z M214 409 V359.0 H215 V409Z M215 409 V346.5 H216 V409Z M216 409 V346.5 H217 V409Z M217 409 V352.8 H218 V409Z M218 409 V359.0 H219 V409Z M219 409 V346.5 H220 V409Z M220 409 V346.5 H221 V409Z M221 409 V352.8 H222 V409Z M222 409 V352.8 H223 V409Z M223 409 V346.5 H224 V409Z M224 409 V346.5 H225 V409Z M225 409 V352.8 H226 V409Z M226 409 V334.0 H227 V409Z M227 409 V352.8 H228 V409Z M228 409 V352.8 H229 V409Z M229 409 V346.5 H230 V409Z M230 409 V340.2 H231 V409Z M231 409 V352.8 H232 V409Z M232 409 V352.8 H233 V409Z M233 409 V346.5 H234 V409Z M234 409 V352.8 H235 V409Z M235 409 V334.0 H236 V409Z M236 409 V352.8 H237 V409Z M237 409 V346.5 H238 V409Z M238 409 V352.8 H239 V409Z M239 409 V340.2 H240 V409Z M240 409 V346.5 H241 V409Z M241 409 V346.5 H242 V409Z M242 409 V340.2 H243 V409Z M243 409 V352.8 H244 V409Z M244 409 V359.0 H245 V409Z M245 409 V352.8 H246 V409Z M246 409 V346.5 H247 V409Z M247 409 V337.1 H248 V409Z M248 409 V346.5 H249 V409Z M249 409 V359.0 H250 V409Z M250 409 V346.5 H251 V409Z M251 409 V346.5 H252 V409Z M252 409 V346.5 H253 V409Z M253 409 V352.8 H254 V409Z M254 409 V340.2 H255 V409Z M255 409 V352.8 H256 V409Z M256 409 V352.8 H257 V409Z M257 409 V346.5 H258 V409Z M258 409 V352.8 H259 V409Z M259 409 V352.8 H260 V409Z M260 409 V352.8 H261 V409Z M261 409 V352.8 H262 V409Z M262 409 V359.0 H263 V409Z M263 409 V352.8 H264 V409Z M264 409 V340.2 H265 V409Z M265 409 V359.0 H266 V409Z M266 409 V346.5 H267 V409Z M267 409 V352.8 H268 V409Z M268 409 V352.8 H269 V409Z M269 409 V334.0 H270 V409Z M270 409 V352.8 H271 V409Z M271 409 V352.8 H272 V409Z M272 409 V352.8 H273 V409Z M273 409 V346.5 H274 V409Z M274 409 V352.8 H275 V409Z M275 409 V327.8 H276 V409Z M276 409 V346.5 H277 V409Z M277 409 V352.8 H278 V409Z M278 409 V352.8 H279 V409Z M279 409 V327.8 H280 V409Z M280 409 V346.5 H281 V409Z M281 409 V327.8 H282 V409Z M282 409 V340.2 H283 V409Z M283 409 V359.0 H284 V409Z M284 409 V352.8 H285 V409Z M285 409 V359.0 H286 V409Z M286 409 V346.5 H287 V409Z M287 409 V352.8 H288 V409Z M288 409 V343.4 H289 V409Z M289 409 V343.4 H290 V409Z M290 409 V352.8 H291 V409Z M291 409 V352.8 H292 V409Z M292 409 V352.8 H293 V409Z M293 409 V352.8 H294 V409Z M294 409 V352.8 H295 V409Z M295 409 V352.8 H296 V409Z M296 409 V346.5 H297 V409Z M297 409 V321.5 H298 V409Z M298 409 V352.8 H299 V409Z M299 409 V352.8 H300 V409Z M300 409 V327.8 H301 V409Z M301 409 V352.8 H302 V409Z M302 409 V334.0 H303 V409Z M303 409 V334.0 H304 V409Z M304 409 V352.8 H305 V409Z M305 409 V346.5 H306 V409Z M306 409 V340.2 H307 V409Z M307 409 V352.8 H308 V409Z M308 409 V352.8 H309 V409Z M309 409 V352.8 H310 V409Z M310 409 V352.8 H311 V409Z M311 409 V359.0 H312 V409Z M312 409 V352.8 H313 V409Z M313 409 V352.8 H314 V409Z M314 409 V359.0 H315 V409Z M315 409 V327.8 H316 V409Z M316 409 V352.8 H317 V409Z M317 409 V352.8 H318 V409Z" fill="url(#bisy)"/>
<path d="M318 409 V365.2 H319 V409Z M319 409 V359.0 H320 V409Z M320 409 V359.0 H321 V409Z M321 409 V359.0 H322 V409Z M322 409 V359.0 H323 V409Z M323 409 V359.0 H324 V409Z M324 409 V346.5 H325 V409Z M325 409 V359.0 H326 V409Z M326 409 V340.2 H327 V409Z M327 409 V365.2 H328 V409Z M328 409 V346.5 H329 V409Z M329 409 V359.0 H330 V409Z M330 409 V365.2 H331 V409Z M331 409 V359.0 H332 V409Z M332 409 V352.8 H333 V409Z M333 409 V352.8 H334 V409Z M334 409 V365.2 H335 V409Z M335 409 V346.5 H336 V409Z M336 409 V359.0 H337 V409Z M337 409 V359.0 H338 V409Z M338 409 V359.0 H339 V409Z M339 409 V365.2 H340 V409Z M340 409 V359.0 H341 V409Z M341 409 V352.8 H342 V409Z M342 409 V352.8 H343 V409Z M343 409 V359.0 H344 V409Z M344 409 V365.2 H345 V409Z M345 409 V365.2 H346 V409Z M346 409 V365.2 H347 V409Z M347 409 V365.2 H348 V409Z M348 409 V359.0 H349 V409Z M349 409 V349.6 H350 V409Z M350 409 V359.0 H351 V409Z M351 409 V359.0 H352 V409Z M352 409 V371.5 H353 V409Z M353 409 V359.0 H354 V409Z M354 409 V365.2 H355 V409Z M355 409 V359.0 H356 V409Z M356 409 V365.2 H357 V409Z M357 409 V365.2 H358 V409Z M358 409 V371.5 H359 V409Z M359 409 V365.2 H360 V409Z M360 409 V365.2 H361 V409Z M361 409 V365.2 H362 V409Z M362 409 V365.2 H363 V409Z M363 409 V365.2 H364 V409Z M364 409 V365.2 H365 V409Z M365 409 V359.0 H366 V409Z M366 409 V365.2 H367 V409Z M367 409 V365.2 H368 V409Z M368 409 V365.2 H369 V409Z M369 409 V365.2 H370 V409Z M370 409 V359.0 H371 V409Z M371 409 V371.5 H372 V409Z M372 409 V352.8 H373 V409Z M373 409 V365.2 H374 V409Z M374 409 V365.2 H375 V409Z M375 409 V365.2 H376 V409Z M376 409 V359.0 H377 V409Z M377 409 V359.0 H378 V409Z M378 409 V359.0 H379 V409Z M379 409 V371.5 H380 V409Z M380 409 V365.2 H381 V409Z M381 409 V365.2 H382 V409Z M382 409 V371.5 H383 V409Z M383 409 V365.2 H384 V409Z M384 409 V359.0 H385 V409Z M385 409 V359.0 H386 V409Z M386 409 V371.5 H387 V409Z M387 409 V365.2 H388 V409Z M388 409 V365.2 H389 V409Z M389 409 V359.0 H390 V409Z M390 409 V352.8 H391 V409Z M391 409 V352.8 H392 V409Z M392 409 V365.2 H393 V409Z M393 409 V365.2 H394 V409Z M394 409 V365.2 H395 V409Z M395 409 V365.2 H396 V409Z M396 409 V352.8 H397 V409Z M397 409 V352.8 H398 V409Z M398 409 V352.8 H399 V409Z M399 409 V359.0 H400 V409Z M400 409 V352.8 H401 V409Z M401 409 V371.5 H402 V409Z M402 409 V365.2 H403 V409Z M403 409 V371.5 H404 V409Z M404 409 V365.2 H405 V409Z M405 409 V365.2 H406 V409Z M406 409 V371.5 H407 V409Z M407 409 V371.5 H408 V409Z M408 409 V371.5 H409 V409Z M409 409 V371.5 H410 V409Z M410 409 V365.2 H411 V409Z M411 409 V377.8 H412 V409Z M412 409 V371.5 H413 V409Z M413 409 V371.5 H414 V409Z M414 409 V371.5 H415 V409Z M415 409 V365.2 H416 V409Z M416 409 V365.2 H417 V409Z M417 409 V371.5 H418 V409Z M418 409 V371.5 H419 V409Z M419 409 V371.5 H420 V409Z M420 409 V365.2 H421 V409Z M421 409 V371.5 H422 V409Z M422 409 V371.5 H423 V409Z M423 409 V371.5 H424 V409Z M424 409 V371.5 H425 V409Z M425 409 V371.5 H426 V409Z M426 409 V371.5 H427 V409Z M427 409 V377.8 H428 V409Z M428 409 V365.2 H429 V409Z M429 409 V371.5 H430 V409Z M430 409 V377.8 H431 V409Z M431 409 V377.8 H432 V409Z M432 409 V377.8 H433 V409Z M433 409 V371.5 H434 V409Z M434 409 V371.5 H435 V409Z M435 409 V377.8 H436 V409Z M436 409 V365.2 H437 V409Z M437 409 V377.8 H438 V409Z M438 409 V371.5 H439 V409Z M439 409 V377.8 H440 V409Z M440 409 V371.5 H441 V409Z M441 409 V377.8 H442 V409Z M442 409 V384.0 H443 V409Z M443 409 V377.8 H444 V409Z M444 409 V377.8 H445 V409Z M445 409 V377.8 H446 V409Z M446 409 V377.8 H447 V409Z M447 409 V377.8 H448 V409Z M448 409 V377.8 H449 V409Z M449 409 V377.8 H450 V409Z M450 409 V371.5 H451 V409Z M451 409 V377.8 H452 V409Z M452 409 V359.0 H453 V409Z M453 409 V377.8 H454 V409Z M454 409 V377.8 H455 V409Z M455 409 V377.8 H456 V409Z M456 409 V377.8 H457 V409Z M457 409 V377.8 H458 V409Z M458 409 V365.2 H459 V409Z M459 409 V377.8 H460 V409Z M460 409 V371.5 H461 V409Z M461 409 V377.8 H462 V409Z M462 409 V377.8 H463 V409Z M463 409 V377.8 H464 V409Z M464 409 V371.5 H465 V409Z M465 409 V377.8 H466 V409Z M466 409 V384.0 H467 V409Z M467 409 V377.8 H468 V409Z M468 409 V384.0 H469 V409Z M469 409 V371.5 H470 V409Z M470 409 V377.8 H471 V409Z M471 409 V377.8 H472 V409Z M472 409 V384.0 H473 V409Z M473 409 V377.8 H474 V409Z M474 409 V365.2 H475 V409Z M475 409 V365.2 H476 V409Z M476 409 V377.8 H477 V409Z M477 409 V365.2 H478 V409Z M478 409 V371.5 H479 V409Z M479 409 V377.8 H480 V409Z M480 409 V377.8 H481 V409Z M481 409 V377.8 H482 V409Z M482 409 V377.8 H483 V409Z M483 409 V371.5 H484 V409Z M484 409 V384.0 H485 V409Z M485 409 V377.8 H486 V409Z M486 409 V377.8 H487 V409Z M487 409 V371.5 H488 V409Z M488 409 V377.8 H489 V409Z M489 409 V377.8 H490 V409Z M490 409 V377.8 H491 V409Z M491 409 V377.8 H492 V409Z M492 409 V384.0 H493 V409Z M493 409 V384.0 H494 V409Z M494 409 V377.8 H495 V409Z M495 409 V384.0 H496 V409Z M496 409 V384.0 H497 V409Z M497 409 V384.0 H498 V409Z M498 409 V384.0 H499 V409Z M499 409 V384.0 H500 V409Z M500 409 V384.0 H501 V409Z M501 409 V384.0 H502 V409Z M502 409 V384.0 H503 V409Z M503 409 V371.5 H504 V409Z M504 409 V384.0 H505 V409Z M505 409 V384.0 H506 V409Z M506 409 V384.0 H507 V409Z M507 409 V384.0 H508 V409Z M508 409 V371.5 H509 V409Z M509 409 V384.0 H510 V409Z M510 409 V377.8 H511 V409Z M511 409 V384.0 H512 V409Z M512 409 V384.0 H513 V409Z M513 409 V371.5 H514 V409Z M514 409 V377.8 H515 V409Z M515 409 V384.0 H516 V409Z M516 409 V359.0 H517 V409Z M517 409 V359.0 H518 V409Z M518 409 V371.5 H519 V409Z M519 409 V371.5 H520 V409Z M520 409 V327.8 H521 V409Z M521 409 V371.5 H522 V409Z M522 409 V346.5 H523 V409Z M523 409 V377.8 H524 V409Z M524 409 V377.8 H525 V409Z M525 409 V377.8 H526 V409Z M526 409 V377.8 H527 V409Z M527 409 V377.8 H528 V409Z M528 409 V359.0 H529 V409Z M529 409 V359.0 H530 V409Z M530 409 V377.8 H531 V409Z M531 409 V377.8 H532 V409Z M532 409 V371.5 H533 V409Z M533 409 V377.8 H534 V409Z M534 409 V377.8 H535 V409Z M535 409 V377.8 H536 V409Z M536 409 V377.8 H537 V409Z M537 409 V377.8 H538 V409Z M538 409 V377.8 H539 V409Z M539 409 V371.5 H540 V409Z M540 409 V377.8 H541 V409Z M541 409 V365.2 H542 V409Z M542 409 V384.0 H543 V409Z M543 409 V365.2 H544 V409Z M544 409 V365.2 H545 V409Z M545 409 V371.5 H546 V409Z M546 409 V377.8 H547 V409Z M547 409 V377.8 H548 V409Z M548 409 V384.0 H549 V409Z M549 409 V384.0 H550 V409Z M550 409 V384.0 H551 V409Z M551 409 V384.0 H552 V409Z M552 409 V384.0 H553 V409Z M553 409 V384.0 H554 V409Z M554 409 V384.0 H555 V409Z M555 409 V384.0 H556 V409Z M556 409 V377.8 H557 V409Z M557 409 V384.0 H558 V409Z M558 409 V384.0 H559 V409Z M559 409 V390.2 H560 V409Z M560 409 V377.8 H561 V409Z M561 409 V384.0 H562 V409Z M562 409 V384.0 H563 V409Z M563 409 V384.0 H564 V409Z M564 409 V384.0 H565 V409Z M565 409 V384.0 H566 V409Z M566 409 V377.8 H567 V409Z M567 409 V384.0 H568 V409Z M568 409 V384.0 H569 V409Z M569 409 V377.8 H570 V409Z M570 409 V384.0 H571 V409Z M571 409 V377.8 H572 V409Z M572 409 V384.0 H573 V409Z M573 409 V377.8 H574 V409Z M574 409 V384.0 H575 V409Z M575 409 V371.5 H576 V409Z M576 409 V390.2 H577 V409Z M577 409 V384.0 H578 V409Z M578 409 V384.0 H579 V409Z M579 409 V371.5 H580 V409Z M580 409 V371.5 H581 V409Z M581 409 V371.5 H582 V409Z M582 409 V377.8 H583 V409Z M583 409 V377.8 H584 V409Z M584 409 V371.5 H585 V409Z M585 409 V384.0 H586 V409Z M586 409 V377.8 H587 V409Z M587 409 V384.0 H588 V409Z M588 409 V384.0 H589 V409Z M589 409 V377.8 H590 V409Z M590 409 V390.2 H591 V409Z M591 409 V390.2 H592 V409Z M592 409 V384.0 H593 V409Z" fill="url(#bisy)"/>
<path d="M190 409 V377.8 H191 V409Z M191 409 V367.9 H192 V409Z M192 409 V365.2 H193 V409Z M193 409 V371.5 H194 V409Z M194 409 V365.2 H195 V409Z M195 409 V359.0 H196 V409Z M196 409 V359.0 H197 V409Z M197 409 V371.5 H198 V409Z M198 409 V365.2 H199 V409Z M199 409 V371.5 H200 V409Z M200 409 V365.2 H201 V409Z M201 409 V380.6 H202 V409Z M202 409 V384.0 H203 V409Z M203 409 V377.8 H204 V409Z M204 409 V377.8 H205 V409Z M205 409 V377.8 H206 V409Z M206 409 V371.5 H207 V409Z M207 409 V371.5 H208 V409Z M209 409 V383.9 H210 V409Z M210 409 V382.9 H211 V409Z M211 409 V384.2 H212 V409Z M212 409 V368.2 H213 V409Z M213 409 V367.9 H214 V409Z M214 409 V361.3 H215 V409Z M215 409 V373.5 H216 V409Z M219 409 V365.9 H220 V409Z M220 409 V365.5 H221 V409Z M221 409 V365.2 H222 V409Z M222 409 V364.9 H223 V409Z M223 409 V364.5 H224 V409Z M224 409 V364.2 H225 V409Z M225 409 V364.0 H226 V409Z M226 409 V363.9 H227 V409Z M227 409 V363.9 H228 V409Z M228 409 V370.1 H229 V409Z M229 409 V357.6 H230 V409Z M230 409 V363.8 H231 V409Z M231 409 V363.8 H232 V409Z M232 409 V363.7 H233 V409Z M235 409 V363.6 H236 V409Z M236 409 V369.8 H237 V409Z M237 409 V363.6 H238 V409Z M238 409 V363.5 H239 V409Z M239 409 V357.2 H240 V409Z M241 409 V369.7 H242 V409Z M242 409 V369.6 H243 V409Z M243 409 V369.7 H244 V409Z M244 409 V363.5 H245 V409Z M245 409 V363.5 H246 V409Z M246 409 V363.5 H247 V409Z M247 409 V363.6 H248 V409Z M249 409 V363.6 H250 V409Z M250 409 V363.7 H251 V409Z M252 409 V357.5 H253 V409Z M254 409 V357.6 H255 V409Z M255 409 V357.6 H256 V409Z M256 409 V363.9 H257 V409Z M257 409 V357.7 H258 V409Z M258 409 V370.2 H259 V409Z M259 409 V370.2 H260 V409Z M261 409 V364.1 H262 V409Z M262 409 V364.1 H263 V409Z M263 409 V364.1 H264 V409Z M264 409 V364.2 H265 V409Z M265 409 V364.2 H266 V409Z M266 409 V364.2 H267 V409Z M267 409 V364.3 H268 V409Z M268 409 V364.3 H269 V409Z M269 409 V370.6 H270 V409Z M271 409 V358.2 H272 V409Z M272 409 V358.2 H273 V409Z M273 409 V364.5 H274 V409Z M274 409 V364.5 H275 V409Z M276 409 V358.4 H277 V409Z M277 409 V358.4 H278 V409Z M279 409 V364.7 H280 V409Z M280 409 V364.8 H281 V409Z M282 409 V364.8 H283 V409Z M289 409 V365.1 H290 V409Z M290 409 V365.1 H291 V409Z M291 409 V365.2 H292 V409Z M292 409 V365.2 H293 V409Z M293 409 V359.0 H294 V409Z M295 409 V359.0 H296 V409Z M296 409 V365.2 H297 V409Z M298 409 V359.0 H299 V409Z M299 409 V371.5 H300 V409Z M300 409 V365.2 H301 V409Z M301 409 V365.2 H302 V409Z M302 409 V365.2 H303 V409Z M303 409 V365.2 H304 V409Z M304 409 V359.0 H305 V409Z M306 409 V365.2 H307 V409Z M307 409 V371.5 H308 V409Z M308 409 V365.2 H309 V409Z M309 409 V359.0 H310 V409Z M310 409 V365.2 H311 V409Z M311 409 V365.2 H312 V409Z M312 409 V365.2 H313 V409Z M313 409 V365.2 H314 V409Z M314 409 V371.5 H315 V409Z M315 409 V371.5 H316 V409Z M316 409 V365.2 H317 V409Z M317 409 V367.4 H318 V409Z M318 409 V369.9 H319 V409Z M319 409 V366.2 H320 V409Z M321 409 V367.8 H322 V409Z M322 409 V367.9 H323 V409Z M323 409 V361.7 H324 V409Z M324 409 V374.2 H325 V409Z M325 409 V374.3 H326 V409Z M326 409 V368.1 H327 V409Z M327 409 V368.2 H328 V409Z M328 409 V368.2 H329 V409Z M329 409 V368.3 H330 V409Z M330 409 V374.6 H331 V409Z M332 409 V362.2 H333 V409Z M333 409 V368.5 H334 V409Z M334 409 V368.5 H335 V409Z M335 409 V368.6 H336 V409Z M336 409 V362.4 H337 V409Z M337 409 V368.7 H338 V409Z M338 409 V368.7 H339 V409Z M339 409 V368.8 H340 V409Z M340 409 V362.6 H341 V409Z M341 409 V368.9 H342 V409Z M342 409 V369.0 H343 V409Z M343 409 V375.3 H344 V409Z M344 409 V369.1 H345 V409Z M345 409 V369.1 H346 V409Z M346 409 V369.2 H347 V409Z M347 409 V369.2 H348 V409Z M348 409 V369.3 H349 V409Z M349 409 V363.1 H350 V409Z M350 409 V369.4 H351 V409Z M351 409 V369.5 H352 V409Z M353 409 V375.8 H354 V409Z M354 409 V375.9 H355 V409Z M355 409 V369.9 H356 V409Z M356 409 V370.3 H357 V409Z M357 409 V370.7 H358 V409Z M358 409 V377.3 H359 V409Z M359 409 V365.1 H360 V409Z M360 409 V371.7 H361 V409Z M361 409 V372.1 H362 V409Z M362 409 V378.7 H363 V409Z M363 409 V379.1 H364 V409Z M364 409 V373.2 H365 V409Z M366 409 V373.9 H367 V409Z M367 409 V373.8 H368 V409Z M368 409 V367.3 H369 V409Z M369 409 V379.5 H370 V409Z M370 409 V366.7 H371 V409Z M371 409 V372.7 H372 V409Z M372 409 V372.4 H373 V409Z M373 409 V378.4 H374 V409Z M374 409 V371.9 H375 V409Z M376 409 V365.1 H377 V409Z M377 409 V371.1 H378 V409Z M378 409 V364.6 H379 V409Z M379 409 V370.5 H380 V409Z M380 409 V370.3 H381 V409Z M381 409 V370.3 H382 V409Z M382 409 V370.4 H383 V409Z M383 409 V370.5 H384 V409Z M384 409 V370.5 H385 V409Z M385 409 V376.9 H386 V409Z M386 409 V370.7 H387 V409Z M387 409 V370.8 H388 V409Z M388 409 V370.8 H389 V409Z M389 409 V370.9 H390 V409Z M390 409 V364.7 H391 V409Z M391 409 V364.8 H392 V409Z M392 409 V377.4 H393 V409Z M393 409 V371.2 H394 V409Z M394 409 V365.0 H395 V409Z M395 409 V371.3 H396 V409Z M396 409 V371.4 H397 V409Z M397 409 V365.2 H398 V409Z M398 409 V371.7 H399 V409Z M399 409 V378.3 H400 V409Z M400 409 V366.2 H401 V409Z M401 409 V372.8 H402 V409Z M402 409 V373.2 H403 V409Z M403 409 V373.5 H404 V409Z M404 409 V367.7 H405 V409Z M405 409 V380.5 H406 V409Z M406 409 V368.4 H407 V409Z M407 409 V368.7 H408 V409Z M408 409 V369.0 H409 V409Z M409 409 V375.6 H410 V409Z M410 409 V369.7 H411 V409Z M411 409 V376.3 H412 V409Z M413 409 V376.9 H414 V409Z M414 409 V377.2 H415 V409Z M415 409 V377.6 H416 V409Z M416 409 V377.9 H417 V409Z M417 409 V372.0 H418 V409Z M418 409 V378.5 H419 V409Z M419 409 V378.9 H420 V409Z M421 409 V373.3 H422 V409Z M423 409 V380.2 H424 V409Z M424 409 V374.2 H425 V409Z M425 409 V374.4 H426 V409Z M427 409 V374.8 H428 V409Z M428 409 V381.3 H429 V409Z M429 409 V381.5 H430 V409Z M430 409 V381.7 H431 V409Z M431 409 V375.7 H432 V409Z M432 409 V375.9 H433 V409Z M433 409 V376.1 H434 V409Z M434 409 V376.3 H435 V409Z M435 409 V382.8 H436 V409Z M436 409 V376.8 H437 V409Z M437 409 V377.0 H438 V409Z M438 409 V383.4 H439 V409Z M439 409 V383.7 H440 V409Z M440 409 V377.6 H441 V409Z M441 409 V384.1 H442 V409Z M442 409 V384.3 H443 V409Z M443 409 V384.5 H444 V409Z M445 409 V385.0 H446 V409Z M446 409 V378.9 H447 V409Z M447 409 V385.4 H448 V409Z M448 409 V385.6 H449 V409Z M449 409 V379.6 H450 V409Z M450 409 V379.6 H451 V409Z M451 409 V385.9 H452 V409Z M452 409 V386.0 H453 V409Z M453 409 V386.0 H454 V409Z M454 409 V386.0 H455 V409Z M455 409 V379.8 H456 V409Z M456 409 V379.8 H457 V409Z M457 409 V379.9 H458 V409Z M458 409 V386.1 H459 V409Z M459 409 V379.9 H460 V409Z M460 409 V379.9 H461 V409Z M461 409 V380.0 H462 V409Z M462 409 V386.2 H463 V409Z M463 409 V380.0 H464 V409Z M464 409 V380.1 H465 V409Z M465 409 V380.1 H466 V409Z M466 409 V380.1 H467 V409Z M467 409 V386.4 H468 V409Z M468 409 V386.4 H469 V409Z M469 409 V386.4 H470 V409Z M470 409 V380.2 H471 V409Z M471 409 V380.3 H472 V409Z M472 409 V386.5 H473 V409Z M473 409 V386.6 H474 V409Z M474 409 V386.6 H475 V409Z M475 409 V386.6 H476 V409Z M476 409 V386.7 H477 V409Z M477 409 V386.7 H478 V409Z M479 409 V386.7 H480 V409Z M480 409 V386.8 H481 V409Z M481 409 V380.5 H482 V409Z M482 409 V380.6 H483 V409Z M483 409 V386.9 H484 V409Z M484 409 V386.9 H485 V409Z M485 409 V386.9 H486 V409Z M486 409 V386.9 H487 V409Z M487 409 V380.7 H488 V409Z M488 409 V380.7 H489 V409Z M489 409 V387.0 H490 V409Z M490 409 V380.8 H491 V409Z M492 409 V387.1 H493 V409Z M493 409 V387.1 H494 V409Z M494 409 V380.9 H495 V409Z M495 409 V387.1 H496 V409Z M496 409 V380.9 H497 V409Z M497 409 V380.9 H498 V409Z M498 409 V380.9 H499 V409Z M499 409 V380.9 H500 V409Z M500 409 V380.9 H501 V409Z M501 409 V380.9 H502 V409Z M502 409 V387.1 H503 V409Z M503 409 V387.1 H504 V409Z M504 409 V380.9 H505 V409Z M505 409 V387.1 H506 V409Z M506 409 V387.1 H507 V409Z M507 409 V387.1 H508 V409Z M509 409 V380.9 H510 V409Z M511 409 V380.9 H512 V409Z M512 409 V380.9 H513 V409Z M513 409 V380.9 H514 V409Z M514 409 V380.9 H515 V409Z M515 409 V387.1 H516 V409Z M516 409 V380.9 H517 V409Z M517 409 V387.1 H518 V409Z M518 409 V380.9 H519 V409Z M519 409 V380.5 H520 V409Z M520 409 V380.0 H521 V409Z M521 409 V385.8 H522 V409Z M522 409 V385.3 H523 V409Z M523 409 V378.5 H524 V409Z M524 409 V384.2 H525 V409Z M525 409 V377.5 H526 V409Z M526 409 V383.2 H527 V409Z M527 409 V382.8 H528 V409Z M528 409 V382.9 H529 V409Z M529 409 V376.9 H530 V409Z M530 409 V383.3 H531 V409Z M531 409 V383.5 H532 V409Z M533 409 V383.8 H534 V409Z M534 409 V377.8 H535 V409Z M535 409 V384.2 H536 V409Z M536 409 V384.4 H537 V409Z M537 409 V384.6 H538 V409Z M538 409 V384.7 H539 V409Z M541 409 V379.0 H542 V409Z M542 409 V385.5 H543 V409Z M543 409 V385.7 H544 V409Z M544 409 V385.8 H545 V409Z M545 409 V379.8 H546 V409Z M546 409 V380.1 H547 V409Z M547 409 V380.4 H548 V409Z M548 409 V380.7 H549 V409Z M549 409 V381.0 H550 V409Z M550 409 V381.3 H551 V409Z M551 409 V387.8 H552 V409Z M552 409 V388.1 H553 V409Z M553 409 V388.4 H554 V409Z M554 409 V382.1 H555 V409Z M555 409 V382.1 H556 V409Z M556 409 V382.1 H557 V409Z M557 409 V382.1 H558 V409Z M558 409 V388.4 H559 V409Z M559 409 V382.1 H560 V409Z M560 409 V388.4 H561 V409Z M561 409 V382.1 H562 V409Z M562 409 V382.1 H563 V409Z M563 409 V382.1 H564 V409Z M564 409 V388.4 H565 V409Z M565 409 V388.4 H566 V409Z M566 409 V388.4 H567 V409Z M567 409 V382.1 H568 V409Z M568 409 V382.1 H569 V409Z M569 409 V382.1 H570 V409Z M570 409 V382.1 H571 V409Z M571 409 V382.1 H572 V409Z M572 409 V388.4 H573 V409Z M573 409 V388.4 H574 V409Z M574 409 V388.4 H575 V409Z M575 409 V388.4 H576 V409Z M577 409 V382.1 H578 V409Z M578 409 V388.4 H579 V409Z M580 409 V382.1 H581 V409Z M581 409 V382.1 H582 V409Z M582 409 V388.4 H583 V409Z M583 409 V382.1 H584 V409Z M584 409 V388.4 H585 V409Z M585 409 V382.1 H586 V409Z M586 409 V388.4 H587 V409Z M587 409 V388.4 H588 V409Z M588 409 V382.1 H589 V409Z M590 409 V388.4 H591 V409Z M591 409 V382.1 H592 V409Z M592 409 V388.4 H593 V409Z" fill="url(#bisg)"/>
<rect x="190" y="240" width="14" height="1" fill="#88ccf4" shape-rendering="crispEdges"/>
<rect x="203" y="239" width="15" height="1" fill="#88ccf4" shape-rendering="crispEdges"/>
<rect x="203" y="239" width="1" height="2" fill="#88ccf4" shape-rendering="crispEdges"/>
<rect x="217" y="238" width="18" height="1" fill="#88ccf4" shape-rendering="crispEdges"/>
<rect x="217" y="238" width="1" height="2" fill="#88ccf4" shape-rendering="crispEdges"/>
<rect x="234" y="237" width="18" height="1" fill="#88ccf4" shape-rendering="crispEdges"/>
<rect x="234" y="237" width="1" height="2" fill="#88ccf4" shape-rendering="crispEdges"/>
<rect x="251" y="236" width="19" height="1" fill="#88ccf4" shape-rendering="crispEdges"/>
<rect x="251" y="236" width="1" height="2" fill="#88ccf4" shape-rendering="crispEdges"/>
<rect x="269" y="235" width="21" height="1" fill="#88ccf4" shape-rendering="crispEdges"/>
<rect x="269" y="235" width="1" height="2" fill="#88ccf4" shape-rendering="crispEdges"/>
<rect x="289" y="234" width="23" height="1" fill="#88ccf4" shape-rendering="crispEdges"/>
<rect x="289" y="234" width="1" height="2" fill="#88ccf4" shape-rendering="crispEdges"/>
<rect x="311" y="233" width="21" height="1" fill="#88ccf4" shape-rendering="crispEdges"/>
<rect x="311" y="233" width="1" height="2" fill="#88ccf4" shape-rendering="crispEdges"/>
<rect x="331" y="232" width="25" height="1" fill="#88ccf4" shape-rendering="crispEdges"/>
<rect x="331" y="232" width="1" height="2" fill="#88ccf4" shape-rendering="crispEdges"/>
<rect x="355" y="231" width="26" height="1" fill="#88ccf4" shape-rendering="crispEdges"/>
<rect x="355" y="231" width="1" height="2" fill="#88ccf4" shape-rendering="crispEdges"/>
<rect x="380" y="230" width="25" height="1" fill="#88ccf4" shape-rendering="crispEdges"/>
<rect x="380" y="230" width="1" height="2" fill="#88ccf4" shape-rendering="crispEdges"/>
<rect x="404" y="229" width="28" height="1" fill="#88ccf4" shape-rendering="crispEdges"/>
<rect x="404" y="229" width="1" height="2" fill="#88ccf4" shape-rendering="crispEdges"/>
<rect x="431" y="228" width="28" height="1" fill="#88ccf4" shape-rendering="crispEdges"/>
<rect x="431" y="228" width="1" height="2" fill="#88ccf4" shape-rendering="crispEdges"/>
<rect x="458" y="227" width="30" height="1" fill="#88ccf4" shape-rendering="crispEdges"/>
<rect x="458" y="227" width="1" height="2" fill="#88ccf4" shape-rendering="crispEdges"/>
<rect x="487" y="226" width="31" height="1" fill="#88ccf4" shape-rendering="crispEdges"/>
<rect x="487" y="226" width="1" height="2" fill="#88ccf4" shape-rendering="crispEdges"/>
<rect x="517" y="225" width="32" height="1" fill="#88ccf4" shape-rendering="crispEdges"/>
<rect x="517" y="225" width="1" height="2" fill="#88ccf4" shape-rendering="crispEdges"/>
<rect x="548" y="224" width="33" height="1" fill="#88ccf4" shape-rendering="crispEdges"/>
<rect x="548" y="224" width="1" height="2" fill="#88ccf4" shape-rendering="crispEdges"/>
<rect x="580" y="223" width="12" height="1" fill="#88ccf4" shape-rendering="crispEdges"/>
<rect x="580" y="223" width="1" height="2" fill="#88ccf4" shape-rendering="crispEdges"/>
</svg>
<svg style="left:0px;top:0px" width="661" height="524" shape-rendering="crispEdges">
<rect x="592" y="128" width="1" height="125" fill="#40c8f0"/>
<rect x="592" y="284" width="1" height="125" fill="#40c8f0"/>
<rect x="190" y="410" width="403" height="1" fill="#e4b4ec"/>
<rect x="189" y="127" width="435" height="1" fill="#000"/>
<rect x="593" y="253" width="31" height="1" fill="#000"/>
<rect x="189" y="127" width="1" height="127" fill="#000"/>
<rect x="623" y="127" width="1" height="127" fill="#000"/>
<rect x="189" y="283" width="435" height="1" fill="#000"/>
<rect x="593" y="409" width="31" height="1" fill="#000"/>
<rect x="189" y="283" width="1" height="127" fill="#000"/>
<rect x="623" y="283" width="1" height="127" fill="#000"/>
<rect x="186" y="233" width="3" height="1" fill="#000"/>
<rect x="186" y="212" width="3" height="1" fill="#000"/>
<rect x="186" y="191" width="3" height="1" fill="#000"/>
<rect x="186" y="170" width="3" height="1" fill="#000"/>
<rect x="186" y="149" width="3" height="1" fill="#000"/>
<rect x="186" y="128" width="3" height="1" fill="#000"/>
<rect x="186" y="253" width="3" height="1" fill="#000"/>
<rect x="186" y="378" width="3" height="1" fill="#000"/>
<rect x="186" y="347" width="3" height="1" fill="#000"/>
<rect x="186" y="316" width="3" height="1" fill="#000"/>
<rect x="186" y="284" width="3" height="1" fill="#000"/>
<rect x="624" y="253" width="3" height="1" fill="#000"/>
<rect x="624" y="247" width="3" height="1" fill="#000"/>
<rect x="624" y="240" width="3" height="1" fill="#000"/>
<rect x="624" y="233" width="3" height="1" fill="#000"/>
<rect x="624" y="226" width="3" height="1" fill="#000"/>
<rect x="624" y="219" width="3" height="1" fill="#000"/>
<rect x="624" y="212" width="3" height="1" fill="#000"/>
<rect x="624" y="205" width="3" height="1" fill="#000"/>
<rect x="624" y="198" width="3" height="1" fill="#000"/>
<rect x="624" y="191" width="3" height="1" fill="#000"/>
<rect x="624" y="184" width="3" height="1" fill="#000"/>
<rect x="624" y="177" width="3" height="1" fill="#000"/>
<rect x="624" y="170" width="3" height="1" fill="#000"/>
<rect x="624" y="163" width="3" height="1" fill="#000"/>
<rect x="624" y="156" width="3" height="1" fill="#000"/>
<rect x="624" y="149" width="3" height="1" fill="#000"/>
<rect x="624" y="142" width="3" height="1" fill="#000"/>
<rect x="624" y="135" width="3" height="1" fill="#000"/>
<rect x="624" y="128" width="3" height="1" fill="#000"/>
</svg>
<div class="t" style="top:228.00px;font-size:10.5px;color:#000;right:475.5px;">100</div>
<div class="t" style="top:207.00px;font-size:10.5px;color:#000;right:475.5px;">200</div>
<div class="t" style="top:186.00px;font-size:10.5px;color:#000;right:475.5px;">300</div>
<div class="t" style="top:165.00px;font-size:10.5px;color:#000;right:475.5px;">400</div>
<div class="t" style="top:144.00px;font-size:10.5px;color:#000;right:475.5px;">500</div>
<div class="t" style="top:123.00px;font-size:10.5px;color:#000;right:475.5px;">600</div>
<div class="t" style="top:255.00px;font-size:10.5px;color:#000;left:89.4px;width:200px;text-align:center;">0.0</div>
<div class="t" style="top:411.00px;font-size:10.5px;color:#000;left:89.4px;width:200px;text-align:center;">0.0</div>
<div class="t" style="top:255.00px;font-size:10.5px;color:#000;left:132.6px;width:200px;text-align:center;">2.5</div>
<div class="t" style="top:411.00px;font-size:10.5px;color:#000;left:132.6px;width:200px;text-align:center;">2.5</div>
<div class="t" style="top:255.00px;font-size:10.5px;color:#000;left:175.79999999999995px;width:200px;text-align:center;">5.0</div>
<div class="t" style="top:411.00px;font-size:10.5px;color:#000;left:175.79999999999995px;width:200px;text-align:center;">5.0</div>
<div class="t" style="top:255.00px;font-size:10.5px;color:#000;left:219.0px;width:200px;text-align:center;">7.5</div>
<div class="t" style="top:411.00px;font-size:10.5px;color:#000;left:219.0px;width:200px;text-align:center;">7.5</div>
<div class="t" style="top:255.00px;font-size:10.5px;color:#000;left:262.2px;width:200px;text-align:center;">10.0</div>
<div class="t" style="top:411.00px;font-size:10.5px;color:#000;left:262.2px;width:200px;text-align:center;">10.0</div>
<div class="t" style="top:255.00px;font-size:10.5px;color:#000;left:305.4px;width:200px;text-align:center;">12.5</div>
<div class="t" style="top:411.00px;font-size:10.5px;color:#000;left:305.4px;width:200px;text-align:center;">12.5</div>
<div class="t" style="top:255.00px;font-size:10.5px;color:#000;left:348.6px;width:200px;text-align:center;">15.0</div>
<div class="t" style="top:411.00px;font-size:10.5px;color:#000;left:348.6px;width:200px;text-align:center;">15.0</div>
<div class="t" style="top:255.00px;font-size:10.5px;color:#000;left:391.8px;width:200px;text-align:center;">17.5</div>
<div class="t" style="top:411.00px;font-size:10.5px;color:#000;left:391.8px;width:200px;text-align:center;">17.5</div>
<div class="t" style="top:255.00px;font-size:10.5px;color:#000;left:435.0px;width:200px;text-align:center;">20.0</div>
<div class="t" style="top:411.00px;font-size:10.5px;color:#000;left:435.0px;width:200px;text-align:center;">20.0</div>
<div class="t" style="top:255.00px;font-size:10.5px;color:#000;left:478.19999999999993px;width:200px;text-align:center;">22.5</div>
<div class="t" style="top:411.00px;font-size:10.5px;color:#000;left:478.19999999999993px;width:200px;text-align:center;">22.5</div>
<div class="t" style="top:255.00px;font-size:10.5px;color:#000;left:602px;">25.0 GB</div>
<div class="t" style="top:411.00px;font-size:10.5px;color:#000;left:602px;">25.0 GB</div>
<div class="t" style="top:235.00px;font-size:10.5px;color:#000;left:627px;">2 X</div>
<div class="t" style="top:221.00px;font-size:10.5px;color:#000;left:627px;">4 X</div>
<div class="t" style="top:207.00px;font-size:10.5px;color:#000;left:627px;">6 X</div>
<div class="t" style="top:193.00px;font-size:10.5px;color:#000;left:627px;">8 X</div>
<div class="t" style="top:179.00px;font-size:10.5px;color:#000;left:627px;">10 X</div>
<div class="t" style="top:165.00px;font-size:10.5px;color:#000;left:627px;">12 X</div>
<div class="t" style="top:151.00px;font-size:10.5px;color:#000;left:627px;">14 X</div>
<div class="t" style="top:137.00px;font-size:10.5px;color:#000;left:627px;">16 X</div>
<div class="t" style="top:123.00px;font-size:10.5px;color:#000;left:627px;">18 X</div>
<div class="t" style="top:373.00px;font-size:10.5px;color:#000;right:475.5px;">5</div>
<div class="t" style="top:342.00px;font-size:10.5px;color:#000;right:475.5px;">10</div>
<div class="t" style="top:311.00px;font-size:10.5px;color:#000;right:475.5px;">15</div>
<div class="t" style="top:279.00px;font-size:10.5px;color:#000;right:475.5px;">20</div>
<div class="t" style="top:379.00px;font-size:10.5px;color:#000;left:627px;">2%</div>
<div class="t" style="top:354.00px;font-size:10.5px;color:#000;left:627px;">4%</div>
<div class="t" style="top:329.00px;font-size:10.5px;color:#000;left:627px;">6%</div>
<div class="t" style="top:304.00px;font-size:10.5px;color:#000;left:627px;">8%</div>
<div class="t" style="top:279.00px;font-size:10.5px;color:#000;left:627px;">10%</div>
<div style="position:absolute;left:191px;top:117px;width:6px;height:8px;background:#007800"></div>
<div class="t" style="left:200.70px;top:116.00px;font-size:10.5px;color:#000;transform:scaleX(0.9095);transform-origin:0 0;white-space:pre;">LDC</div>
<div style="position:absolute;left:223px;top:117px;width:6px;height:8px;background:#80d0ff"></div>
<div class="t" style="left:232.40px;top:116.00px;font-size:10.5px;color:#000;transform:scaleX(1.0026);transform-origin:0 0;white-space:pre;">Read speed</div>
<div style="position:absolute;left:293px;top:117px;width:6px;height:8px;background:#ff80ff"></div>
<div class="t" style="left:302.30px;top:116.00px;font-size:10.5px;color:#000;transform:scaleX(1.0242);transform-origin:0 0;white-space:pre;">Write speed</div>
<div style="position:absolute;left:191px;top:273px;width:6px;height:8px;background:#007800"></div>
<div class="t" style="left:200.50px;top:272.00px;font-size:10.5px;color:#000;transform:scaleX(0.8698);transform-origin:0 0;white-space:pre;">BIS</div>
<div style="position:absolute;left:219px;top:273px;width:6px;height:8px;background:#d0a0d0"></div>
<div class="t" style="left:228.40px;top:272.00px;font-size:10.5px;color:#000;transform:scaleX(0.9714);transform-origin:0 0;white-space:pre;">Jitter</div>
<div style="position:absolute;left:254px;top:270px;width:8px;height:3px;background:#000"></div>
<div class="t" style="left:253.00px;top:431.00px;font-size:10.6px;color:#000;transform:scaleX(0.8962);transform-origin:0 0;white-space:pre;">LDC</div>
<div class="t" style="left:310.00px;top:431.00px;font-size:10.6px;color:#000;transform:scaleX(0.9474);transform-origin:0 0;white-space:pre;">BIS</div>
<div class="t" style="left:163.40px;top:448.00px;font-size:10.6px;color:#000;transform:scaleX(1.0139);transform-origin:0 0;white-space:pre;">Avg</div>
<div class="t" style="left:246.00px;top:448.00px;font-size:10.6px;color:#1414f0;transform:scaleX(0.9793);transform-origin:0 0;white-space:pre;">48.81</div>
<div class="t" style="left:306.50px;top:448.00px;font-size:10.6px;color:#1414f0;transform:scaleX(0.9540);transform-origin:0 0;white-space:pre;">1.19</div>
<div class="t" style="left:163.50px;top:464.00px;font-size:10.6px;color:#000;transform:scaleX(1.0224);transform-origin:0 0;white-space:pre;">Max</div>
<div class="t" style="left:255.60px;top:464.00px;font-size:10.6px;color:#1414f0;transform:scaleX(0.9266);transform-origin:0 0;white-space:pre;">585</div>
<div class="t" style="left:315.00px;top:464.00px;font-size:10.6px;color:#1414f0;transform:scaleX(0.9492);transform-origin:0 0;white-space:pre;">14</div>
<div class="t" style="left:161.40px;top:480.00px;font-size:10.6px;color:#000;transform:scaleX(1.0446);transform-origin:0 0;white-space:pre;">Total</div>
<div class="t" style="left:224.50px;top:480.00px;font-size:10.6px;color:#1414f0;transform:scaleX(1.0074);transform-origin:0 0;white-space:pre;">18634845</div>
<div class="t" style="left:291.10px;top:480.00px;font-size:10.6px;color:#1414f0;transform:scaleX(0.9929);transform-origin:0 0;white-space:pre;">453987</div>
<div style="position:absolute;left:395px;top:430px;width:13px;height:13px;background:#fff;border:1px solid #333;"></div>
<svg style="left:395px;top:430px" width="13" height="13"><path d="M2.5 6.5 L5 9 L10.5 3.5" fill="none" stroke="#333" stroke-width="1.2"/></svg>
<div class="t" style="left:417.20px;top:432.00px;font-size:10.6px;color:#000;transform:scaleX(1.0806);transform-origin:0 0;white-space:pre;">Jitter</div>
<div class="t" style="left:414.80px;top:448.00px;font-size:10.6px;color:#1414f0;transform:scaleX(0.9819);transform-origin:0 0;white-space:pre;">-0.1%</div>
<div class="t" style="left:418.50px;top:464.00px;font-size:10.6px;color:#1414f0;transform:scaleX(0.9731);transform-origin:0 0;white-space:pre;">0.0%</div>
<div class="t" style="left:461.40px;top:436.00px;font-size:10.6px;color:#000;transform:scaleX(1.0049);transform-origin:0 0;white-space:pre;">Speed</div>
<div class="t" style="left:520.00px;top:436.00px;font-size:10.6px;color:#1414f0;transform:scaleX(0.9690);transform-origin:0 0;white-space:pre;">4.23 X</div>
<div class="t" style="left:461.50px;top:464.00px;font-size:10.6px;color:#000;transform:scaleX(1.0875);transform-origin:0 0;white-space:pre;">Position</div>
<div class="t" style="left:520.00px;top:464.00px;font-size:10.6px;color:#1414f0;transform:scaleX(1.0207);transform-origin:0 0;white-space:pre;">23862 MB</div>
<div class="t" style="left:461.50px;top:480.00px;font-size:10.6px;color:#000;transform:scaleX(0.9939);transform-origin:0 0;white-space:pre;">Samples</div>
<div class="t" style="left:520.00px;top:480.00px;font-size:10.6px;color:#1414f0;transform:scaleX(0.9958);transform-origin:0 0;white-space:pre;">380235</div>
<div style="position:absolute;left:575px;top:428px;width:75px;height:21px;background:#e1e1e1;border:1px solid #adadad;"></div>
<div class="t" style="left:578.80px;top:434.00px;font-size:11px;color:#000;transform:scaleX(0.9416);transform-origin:0 0;white-space:pre;">4.0 X</div>
<svg style="left:636px;top:436px" width="10" height="6"><path d="M0.5 0.5 L5 5 L9.5 0.5" fill="none" stroke="#333" stroke-width="1.1"/></svg>
<div style="position:absolute;left:576px;top:452px;width:73px;height:21px;background:#e1e1e1;border:1px solid #adadad;"></div>
<div class="t" style="left:590.60px;top:458.00px;font-size:11.2px;color:#000;transform:scaleX(1.0535);transform-origin:0 0;white-space:pre;">Start full</div>
<div style="position:absolute;left:575px;top:479px;width:73px;height:21px;background:#e1e1e1;border:1px solid #adadad;"></div>
<div class="t" style="left:587.40px;top:485.00px;font-size:11.2px;color:#000;transform:scaleX(1.0271);transform-origin:0 0;white-space:pre;">Start part</div>
</body></html>
